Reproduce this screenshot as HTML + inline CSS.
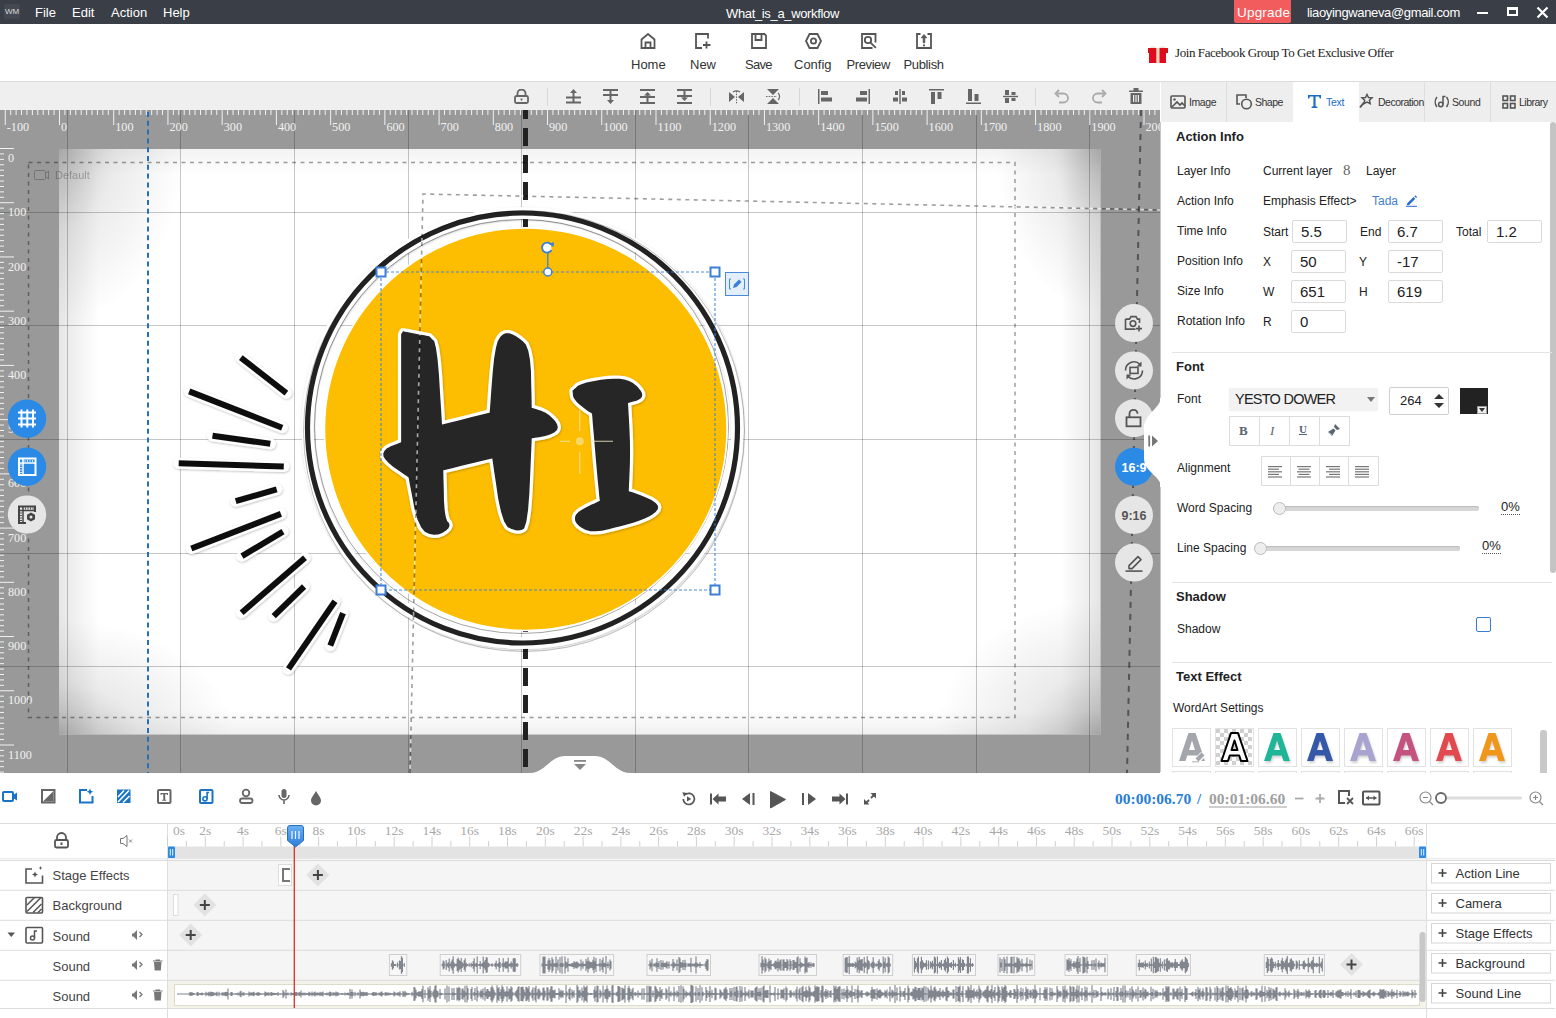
<!DOCTYPE html>
<html><head><meta charset="utf-8">
<style>
*{margin:0;padding:0;box-sizing:border-box}
html,body{width:1556px;height:1018px;overflow:hidden;background:#fff;font-family:"Liberation Sans",sans-serif;color:#333}
.a{position:absolute}
svg{display:block}
#title{left:0;top:0;width:1556px;height:24px;background:#393e47;color:#fff;font-size:13px}
#title .m{position:absolute;top:5px}
#tb{left:0;top:24px;width:1556px;height:58px;background:#fff;border-bottom:1px solid #dcdcdc}
.tbi{position:absolute;top:0;width:50px;text-align:center;font-size:13px;color:#333}
.tbi svg{position:absolute;left:16px;top:9px}
.tbi span{position:absolute;left:-10px;width:70px;top:33px;text-align:center}
#al{left:0;top:82px;width:1160px;height:28px;background:#efefef}
#canvas{left:0;top:110px;width:1160px;height:663px;background:#999;overflow:hidden}
#rp{left:1160px;top:81px;width:396px;height:691px;background:#fff}
.inp{border:1px solid #dadada;border-radius:2px;background:#fff;font-size:15px;color:#222;padding-left:8px;line-height:21px}
#bt{left:0;top:773px;width:1556px;height:50px;background:#fff}
#tl{left:0;top:823px;width:1556px;height:195px;background:#fff;border-top:1px solid #e0e0e0}
</style></head><body>
<div id="title" class="a">
  <div class="a" style="left:4px;top:4px;width:16px;height:15px;background:#434852;border-radius:2px;font-size:8px;line-height:15px;text-align:center;color:#ddd">WM</div>
  <span class="m" style="left:35px">File</span>
  <span class="m" style="left:72px">Edit</span>
  <span class="m" style="left:111px">Action</span>
  <span class="m" style="left:163px">Help</span>
  <span class="m" style="left:726px;top:6px;letter-spacing:-0.35px">What_is_a_workflow</span>
  <div class="a" style="left:1234px;top:0;width:57px;height:23px;background:#f25c5c;border-radius:0 0 2px 2px"></div>
  <span class="m" style="left:1237px;top:5px;font-size:13.5px;letter-spacing:0.2px">Upgrade</span>
  <span class="m" style="left:1307px;top:5px;font-size:13px;letter-spacing:-0.35px">liaoyingwaneva@gmail.com</span>
  <div class="a" style="left:1477px;top:12px;width:11px;height:2px;background:#fff"></div>
  <div class="a" style="left:1507px;top:7px;width:11px;height:9px;border:2px solid #fff;border-top-width:3px"></div>
  <svg class="a" style="left:1536px;top:6px" width="13" height="13" viewBox="0 0 13 13"><path d="M1.5 1.5L11.5 11.5M11.5 1.5L1.5 11.5" stroke="#fff" stroke-width="2.2"/></svg>

</div>

<div id="tb" class="a">
  <svg class="a" style="left:640px;top:9px" width="16" height="16" viewBox="0 0 16 16" fill="none" stroke="#555" stroke-width="1.8"><path d="M1.5 15V6.5L8 1l6.5 5.5V15z"/><path d="M5.5 15V9.5h5V15"/></svg>
  <svg class="a" style="left:695px;top:9px" width="17" height="16" viewBox="0 0 17 16" fill="none" stroke="#555" stroke-width="1.8"><path d="M7 15H1V1h12v4.5"/><path d="M11.5 8.5v7M8 12h7.5"/></svg>
  <svg class="a" style="left:751px;top:9px" width="16" height="16" viewBox="0 0 16 16" fill="none" stroke="#555" stroke-width="1.8"><path d="M1 1h12.5l1.5 1.5V15H1z"/><path d="M4.5 1v6h6V1"/></svg>
  <svg class="a" style="left:805px;top:9px" width="17" height="16" viewBox="0 0 17 16" fill="none" stroke="#555" stroke-width="1.8"><path d="M4.5 1h8l3.5 7-3.5 7h-8L1 8z"/><circle cx="8.5" cy="8" r="2.6"/></svg>
  <svg class="a" style="left:861px;top:9px" width="16" height="16" viewBox="0 0 16 16" fill="none" stroke="#555" stroke-width="1.8"><path d="M11.5 15H1V1h13.5v8.5"/><circle cx="7" cy="7" r="3.2"/><path d="M9.3 9.3L14.8 14.8"/></svg>
  <svg class="a" style="left:916px;top:9px" width="16" height="16" viewBox="0 0 16 16" fill="none" stroke="#555" stroke-width="1.8"><path d="M4.5 1H1v14h14V1h-3.5"/><path d="M8 1.5L5.2 4.8h2v5h1.6v-5h2z" fill="#555" stroke-width="0.8"/><path d="M7 11.5h2v1.8H7z" fill="#555" stroke="none"/></svg>
  <span class="a" style="left:631px;top:33px;font-size:13px;color:#333">Home</span>
  <span class="a" style="left:690px;top:33px;font-size:13px;color:#333">New</span>
  <span class="a" style="left:745px;top:33px;font-size:13px;letter-spacing:-0.7px;color:#333">Save</span>
  <span class="a" style="left:794px;top:33px;font-size:13px;color:#333">Config</span>
  <span class="a" style="left:846.5px;top:33px;font-size:13px;letter-spacing:-0.4px;color:#333">Preview</span>
  <span class="a" style="left:903.5px;top:33px;font-size:13px;letter-spacing:-0.35px;color:#333">Publish</span>
  <svg class="a" style="left:1147px;top:18px" width="22" height="22" viewBox="0 0 22 22"><path d="M3,6 C4,3 8,4 10.5,7 C13,4 17,3 19,6 L18,8 H4z" fill="#f3e4d8"/><rect x="1" y="6" width="20" height="5" fill="#d8101e"/><rect x="2" y="11" width="17" height="10" fill="#e20a1e"/><rect x="9.3" y="6" width="3.2" height="15" fill="#fad7b8"/></svg>
  <span class="a" style="left:1175px;top:21px;font-size:13px;letter-spacing:-0.42px;font-family:'Liberation Serif',serif;color:#222">Join Facebook Group To Get Exclusive Offer</span>
</div>


<div id="al" class="a">
  <svg class="a" style="left:514px;top:7px" width="15" height="15" viewBox="0 0 15 15" fill="none" stroke="#666" stroke-width="1.8"><path d="M3.5 7V4.5a4 4 0 0 1 8 0V7"/><rect x="1" y="7" width="13" height="7" rx="1.5"/><path d="M7.5 9.5v2"/></svg>
  <div class="a" style="left:547px;top:6px;width:1px;height:18px;background:#d8d8d8"></div>
  <svg class="a" style="left:566px;top:7px" width="15" height="15" viewBox="0 0 15 15" fill="#666"><path d="M0 7.5h15v2H0zM0 12.5h15v2H0z" /><path d="M6.5 4h2v9h-2z"/><path d="M7.5 0L11 4H4z"/></svg>
  <svg class="a" style="left:603px;top:7px" width="15" height="15" viewBox="0 0 15 15" fill="#666"><path d="M0 0h15v2H0zM0 5h15v2H0z" /><path d="M6.5 2h2v9h-2z"/><path d="M7.5 15L11 11H4z"/></svg>
  <svg class="a" style="left:640px;top:7px" width="15" height="15" viewBox="0 0 15 15" fill="#666"><path d="M0 0h15v2H0zM0 7h15v2H0zM0 13h15v2H0z" /><path d="M6.5 5h2v8h-2z"/><path d="M7.5 3L11 6.5H4z"/></svg>
  <svg class="a" style="left:677px;top:7px" width="15" height="15" viewBox="0 0 15 15" fill="#666"><path d="M0 0h15v2H0zM0 6h15v2H0zM0 13h15v2H0z" /><path d="M6.5 2h2v8h-2z"/><path d="M7.5 12L11 8.5H4z"/></svg>
  <div class="a" style="left:710px;top:6px;width:1px;height:18px;background:#d8d8d8"></div>
  <svg class="a" style="left:729px;top:7px" width="15" height="15" viewBox="0 0 15 15" fill="#666"><path d="M0 3l6 5-6 5z M15 3l-6 5 6 5z"/><path d="M7.5 2v13" stroke="#666" stroke-width="1" stroke-dasharray="1.5 1.2"/><path d="M4 3a5 3 0 0 1 7 0" fill="none" stroke="#666" stroke-width="1.2"/></svg>
  <svg class="a" style="left:766px;top:7px" width="15" height="15" viewBox="0 0 15 15" fill="#666"><path d="M1 0h12L7 6z M1 15h12L7 9z"/><path d="M0 7.5h11" stroke="#666" stroke-width="1" stroke-dasharray="1.5 1.2"/><path d="M12 4a3 4 0 0 1 0 7" fill="none" stroke="#666" stroke-width="1.2"/></svg>
  <div class="a" style="left:799px;top:6px;width:1px;height:18px;background:#d8d8d8"></div>
  <svg class="a" style="left:818px;top:7px" width="15" height="15" viewBox="0 0 15 15" fill="#666"><path d="M0 0h1.5v15H0z"/><path d="M3 2h7v4H3zM3 8.5h11v4H3z"/></svg>
  <svg class="a" style="left:855px;top:7px" width="15" height="15" viewBox="0 0 15 15" fill="#666"><path d="M13.5 0H15v15h-1.5z"/><path d="M5 2h7v4H5zM1 8.5h11v4H1z"/></svg>
  <svg class="a" style="left:893px;top:7px" width="14" height="15" viewBox="0 0 14 15" fill="#666"><path d="M6.3 0h1.4v15H6.3z"/><path d="M2 2h3v4H2zM9 2h3v4H9zM0 8.5h5v4H0zM9 8.5h5v4H9z"/></svg>
  <svg class="a" style="left:929px;top:7px" width="15" height="15" viewBox="0 0 15 15" fill="#666"><path d="M0 0h15v1.5H0z"/><path d="M2 3h4v12H2zM8.5 3h4v7h-4z"/></svg>
  <svg class="a" style="left:966px;top:7px" width="15" height="15" viewBox="0 0 15 15" fill="#666"><path d="M0 13.5h15V15H0z"/><path d="M2 0h4v12H2zM8.5 5h4v7h-4z"/></svg>
  <svg class="a" style="left:1003px;top:7px" width="15" height="15" viewBox="0 0 15 15" fill="#666"><path d="M0 6.8h15v1.4H0z"/><path d="M2 1h4v5H2zM8.5 3h4v3h-4zM2 9h4v5H2zM8.5 9h4v3h-4z"/></svg>
  <div class="a" style="left:1035px;top:6px;width:1px;height:18px;background:#d8d8d8"></div>
  <svg class="a" style="left:1054px;top:7px" width="16" height="15" viewBox="0 0 16 15" fill="none" stroke="#aaa" stroke-width="1.8"><path d="M5 1L1.5 4.5 5 8"/><path d="M2 4.5h7.5a4.5 4.5 0 0 1 0 9H5"/></svg>
  <svg class="a" style="left:1091px;top:7px" width="16" height="15" viewBox="0 0 16 15" fill="none" stroke="#aaa" stroke-width="1.8"><path d="M11 1l3.5 3.5L11 8"/><path d="M14 4.5H6.5a4.5 4.5 0 0 0 0 9H11"/></svg>
  <svg class="a" style="left:1129px;top:6px" width="14" height="16" viewBox="0 0 14 16" fill="#666"><path d="M0 2.5h14V4H0zM4.5 0h5v2.5h-5z"/><path d="M1.5 5h11v11h-11z"/><path d="M4 7h1.2v7H4zM6.4 7h1.2v7H6.4zM8.8 7H10v7H8.8z" fill="#efefef"/></svg>
</div>

<div id="canvas" class="a"><svg class="a" style="left:0;top:0" width="1160" height="663" viewBox="0 110 1160 663">
<defs><radialGradient id="vg1" cx="0.5" cy="0.5" r="0.5"><stop offset="0" stop-color="#000" stop-opacity="0.24"/><stop offset="0.45" stop-color="#000" stop-opacity="0.08"/><stop offset="1" stop-color="#000" stop-opacity="0"/></radialGradient><filter id="sh" x="-10%" y="-10%" width="120%" height="120%"><feDropShadow dx="0.5" dy="1" stdDeviation="1" flood-color="#000" flood-opacity="0.25"/></filter><clipPath id="stg"><rect x="59" y="149" width="1041.5" height="585.5"/></clipPath><linearGradient id="eL" x1="0" y1="0" x2="1" y2="0"><stop offset="0" stop-color="#000" stop-opacity="0.10"/><stop offset="1" stop-color="#000" stop-opacity="0"/></linearGradient><linearGradient id="eR" x1="1" y1="0" x2="0" y2="0"><stop offset="0" stop-color="#000" stop-opacity="0.10"/><stop offset="1" stop-color="#000" stop-opacity="0"/></linearGradient><linearGradient id="eT" x1="0" y1="0" x2="0" y2="1"><stop offset="0" stop-color="#000" stop-opacity="0.05"/><stop offset="1" stop-color="#000" stop-opacity="0"/></linearGradient><linearGradient id="eB" x1="0" y1="1" x2="0" y2="0"><stop offset="0" stop-color="#000" stop-opacity="0.06"/><stop offset="1" stop-color="#000" stop-opacity="0"/></linearGradient></defs>
<rect x="0" y="110" width="1160" height="663" fill="#999"/>
<rect x="59" y="149" width="1041.5" height="585.5" fill="#fff"/>
<g clip-path="url(#stg)">
<ellipse cx="59" cy="148.5" rx="125" ry="175" fill="url(#vg1)"/>
<ellipse cx="1100.5" cy="148.5" rx="105" ry="165" fill="url(#vg1)"/>
<ellipse cx="59" cy="734.5" rx="175" ry="115" fill="url(#vg1)"/>
<ellipse cx="1100.5" cy="734.5" rx="165" ry="135" fill="url(#vg1)"/>
<rect x="59" y="149" width="40" height="585.5" fill="url(#eL)"/>
<rect x="1060.5" y="149" width="40" height="585.5" fill="url(#eR)"/>
<rect x="59" y="149" width="1041.5" height="25" fill="url(#eT)"/>
<rect x="59" y="709.5" width="1041.5" height="25" fill="url(#eB)"/>
</g>
<line x1="67.5" y1="110" x2="67.5" y2="773" stroke="#000" stroke-opacity="0.22" stroke-width="1"/>
<line x1="180.5" y1="110" x2="180.5" y2="773" stroke="#000" stroke-opacity="0.22" stroke-width="1"/>
<line x1="294.5" y1="110" x2="294.5" y2="773" stroke="#000" stroke-opacity="0.22" stroke-width="1"/>
<line x1="408.5" y1="110" x2="408.5" y2="773" stroke="#000" stroke-opacity="0.22" stroke-width="1"/>
<line x1="521.5" y1="110" x2="521.5" y2="773" stroke="#000" stroke-opacity="0.22" stroke-width="1"/>
<line x1="635.5" y1="110" x2="635.5" y2="773" stroke="#000" stroke-opacity="0.22" stroke-width="1"/>
<line x1="748.5" y1="110" x2="748.5" y2="773" stroke="#000" stroke-opacity="0.22" stroke-width="1"/>
<line x1="862.5" y1="110" x2="862.5" y2="773" stroke="#000" stroke-opacity="0.22" stroke-width="1"/>
<line x1="976.5" y1="110" x2="976.5" y2="773" stroke="#000" stroke-opacity="0.22" stroke-width="1"/>
<line x1="1089.5" y1="110" x2="1089.5" y2="773" stroke="#000" stroke-opacity="0.22" stroke-width="1"/>
<line x1="0" y1="98.5" x2="1160" y2="98.5" stroke="#000" stroke-opacity="0.22" stroke-width="1"/>
<line x1="0" y1="212.5" x2="1160" y2="212.5" stroke="#000" stroke-opacity="0.22" stroke-width="1"/>
<line x1="0" y1="325.5" x2="1160" y2="325.5" stroke="#000" stroke-opacity="0.22" stroke-width="1"/>
<line x1="0" y1="439.5" x2="1160" y2="439.5" stroke="#000" stroke-opacity="0.22" stroke-width="1"/>
<line x1="0" y1="553.5" x2="1160" y2="553.5" stroke="#000" stroke-opacity="0.22" stroke-width="1"/>
<line x1="0" y1="666.5" x2="1160" y2="666.5" stroke="#000" stroke-opacity="0.22" stroke-width="1"/>
<line x1="0" y1="780.5" x2="1160" y2="780.5" stroke="#000" stroke-opacity="0.22" stroke-width="1"/>
<line x1="5.27" y1="110" x2="5.27" y2="125" stroke="#f2f2f2" stroke-width="1"/>
<text x="6.8" y="131" font-family="Liberation Serif" font-size="12.2" fill="#f2f2f2">-100</text>
<line x1="10.70" y1="110" x2="10.70" y2="115" stroke="#f2f2f2" stroke-width="1"/>
<line x1="16.12" y1="110" x2="16.12" y2="115" stroke="#f2f2f2" stroke-width="1"/>
<line x1="21.54" y1="110" x2="21.54" y2="115" stroke="#f2f2f2" stroke-width="1"/>
<line x1="26.96" y1="110" x2="26.96" y2="115" stroke="#f2f2f2" stroke-width="1"/>
<line x1="32.39" y1="110" x2="32.39" y2="115" stroke="#f2f2f2" stroke-width="1"/>
<line x1="37.81" y1="110" x2="37.81" y2="115" stroke="#f2f2f2" stroke-width="1"/>
<line x1="43.23" y1="110" x2="43.23" y2="115" stroke="#f2f2f2" stroke-width="1"/>
<line x1="48.65" y1="110" x2="48.65" y2="115" stroke="#f2f2f2" stroke-width="1"/>
<line x1="54.08" y1="110" x2="54.08" y2="115" stroke="#f2f2f2" stroke-width="1"/>
<line x1="59.50" y1="110" x2="59.50" y2="125" stroke="#f2f2f2" stroke-width="1"/>
<text x="61.0" y="131" font-family="Liberation Serif" font-size="12.2" fill="#f2f2f2">0</text>
<line x1="64.92" y1="110" x2="64.92" y2="115" stroke="#f2f2f2" stroke-width="1"/>
<line x1="70.35" y1="110" x2="70.35" y2="115" stroke="#f2f2f2" stroke-width="1"/>
<line x1="75.77" y1="110" x2="75.77" y2="115" stroke="#f2f2f2" stroke-width="1"/>
<line x1="81.19" y1="110" x2="81.19" y2="115" stroke="#f2f2f2" stroke-width="1"/>
<line x1="86.61" y1="110" x2="86.61" y2="115" stroke="#f2f2f2" stroke-width="1"/>
<line x1="92.04" y1="110" x2="92.04" y2="115" stroke="#f2f2f2" stroke-width="1"/>
<line x1="97.46" y1="110" x2="97.46" y2="115" stroke="#f2f2f2" stroke-width="1"/>
<line x1="102.88" y1="110" x2="102.88" y2="115" stroke="#f2f2f2" stroke-width="1"/>
<line x1="108.30" y1="110" x2="108.30" y2="115" stroke="#f2f2f2" stroke-width="1"/>
<line x1="113.73" y1="110" x2="113.73" y2="125" stroke="#f2f2f2" stroke-width="1"/>
<text x="115.2" y="131" font-family="Liberation Serif" font-size="12.2" fill="#f2f2f2">100</text>
<line x1="119.15" y1="110" x2="119.15" y2="115" stroke="#f2f2f2" stroke-width="1"/>
<line x1="124.57" y1="110" x2="124.57" y2="115" stroke="#f2f2f2" stroke-width="1"/>
<line x1="129.99" y1="110" x2="129.99" y2="115" stroke="#f2f2f2" stroke-width="1"/>
<line x1="135.42" y1="110" x2="135.42" y2="115" stroke="#f2f2f2" stroke-width="1"/>
<line x1="140.84" y1="110" x2="140.84" y2="115" stroke="#f2f2f2" stroke-width="1"/>
<line x1="146.26" y1="110" x2="146.26" y2="115" stroke="#f2f2f2" stroke-width="1"/>
<line x1="151.68" y1="110" x2="151.68" y2="115" stroke="#f2f2f2" stroke-width="1"/>
<line x1="157.11" y1="110" x2="157.11" y2="115" stroke="#f2f2f2" stroke-width="1"/>
<line x1="162.53" y1="110" x2="162.53" y2="115" stroke="#f2f2f2" stroke-width="1"/>
<line x1="167.95" y1="110" x2="167.95" y2="125" stroke="#f2f2f2" stroke-width="1"/>
<text x="169.5" y="131" font-family="Liberation Serif" font-size="12.2" fill="#f2f2f2">200</text>
<line x1="173.37" y1="110" x2="173.37" y2="115" stroke="#f2f2f2" stroke-width="1"/>
<line x1="178.80" y1="110" x2="178.80" y2="115" stroke="#f2f2f2" stroke-width="1"/>
<line x1="184.22" y1="110" x2="184.22" y2="115" stroke="#f2f2f2" stroke-width="1"/>
<line x1="189.64" y1="110" x2="189.64" y2="115" stroke="#f2f2f2" stroke-width="1"/>
<line x1="195.06" y1="110" x2="195.06" y2="115" stroke="#f2f2f2" stroke-width="1"/>
<line x1="200.49" y1="110" x2="200.49" y2="115" stroke="#f2f2f2" stroke-width="1"/>
<line x1="205.91" y1="110" x2="205.91" y2="115" stroke="#f2f2f2" stroke-width="1"/>
<line x1="211.33" y1="110" x2="211.33" y2="115" stroke="#f2f2f2" stroke-width="1"/>
<line x1="216.76" y1="110" x2="216.76" y2="115" stroke="#f2f2f2" stroke-width="1"/>
<line x1="222.18" y1="110" x2="222.18" y2="125" stroke="#f2f2f2" stroke-width="1"/>
<text x="223.7" y="131" font-family="Liberation Serif" font-size="12.2" fill="#f2f2f2">300</text>
<line x1="227.60" y1="110" x2="227.60" y2="115" stroke="#f2f2f2" stroke-width="1"/>
<line x1="233.02" y1="110" x2="233.02" y2="115" stroke="#f2f2f2" stroke-width="1"/>
<line x1="238.45" y1="110" x2="238.45" y2="115" stroke="#f2f2f2" stroke-width="1"/>
<line x1="243.87" y1="110" x2="243.87" y2="115" stroke="#f2f2f2" stroke-width="1"/>
<line x1="249.29" y1="110" x2="249.29" y2="115" stroke="#f2f2f2" stroke-width="1"/>
<line x1="254.71" y1="110" x2="254.71" y2="115" stroke="#f2f2f2" stroke-width="1"/>
<line x1="260.14" y1="110" x2="260.14" y2="115" stroke="#f2f2f2" stroke-width="1"/>
<line x1="265.56" y1="110" x2="265.56" y2="115" stroke="#f2f2f2" stroke-width="1"/>
<line x1="270.98" y1="110" x2="270.98" y2="115" stroke="#f2f2f2" stroke-width="1"/>
<line x1="276.40" y1="110" x2="276.40" y2="125" stroke="#f2f2f2" stroke-width="1"/>
<text x="277.9" y="131" font-family="Liberation Serif" font-size="12.2" fill="#f2f2f2">400</text>
<line x1="281.83" y1="110" x2="281.83" y2="115" stroke="#f2f2f2" stroke-width="1"/>
<line x1="287.25" y1="110" x2="287.25" y2="115" stroke="#f2f2f2" stroke-width="1"/>
<line x1="292.67" y1="110" x2="292.67" y2="115" stroke="#f2f2f2" stroke-width="1"/>
<line x1="298.09" y1="110" x2="298.09" y2="115" stroke="#f2f2f2" stroke-width="1"/>
<line x1="303.52" y1="110" x2="303.52" y2="115" stroke="#f2f2f2" stroke-width="1"/>
<line x1="308.94" y1="110" x2="308.94" y2="115" stroke="#f2f2f2" stroke-width="1"/>
<line x1="314.36" y1="110" x2="314.36" y2="115" stroke="#f2f2f2" stroke-width="1"/>
<line x1="319.78" y1="110" x2="319.78" y2="115" stroke="#f2f2f2" stroke-width="1"/>
<line x1="325.21" y1="110" x2="325.21" y2="115" stroke="#f2f2f2" stroke-width="1"/>
<line x1="330.63" y1="110" x2="330.63" y2="125" stroke="#f2f2f2" stroke-width="1"/>
<text x="332.1" y="131" font-family="Liberation Serif" font-size="12.2" fill="#f2f2f2">500</text>
<line x1="336.05" y1="110" x2="336.05" y2="115" stroke="#f2f2f2" stroke-width="1"/>
<line x1="341.48" y1="110" x2="341.48" y2="115" stroke="#f2f2f2" stroke-width="1"/>
<line x1="346.90" y1="110" x2="346.90" y2="115" stroke="#f2f2f2" stroke-width="1"/>
<line x1="352.32" y1="110" x2="352.32" y2="115" stroke="#f2f2f2" stroke-width="1"/>
<line x1="357.74" y1="110" x2="357.74" y2="115" stroke="#f2f2f2" stroke-width="1"/>
<line x1="363.17" y1="110" x2="363.17" y2="115" stroke="#f2f2f2" stroke-width="1"/>
<line x1="368.59" y1="110" x2="368.59" y2="115" stroke="#f2f2f2" stroke-width="1"/>
<line x1="374.01" y1="110" x2="374.01" y2="115" stroke="#f2f2f2" stroke-width="1"/>
<line x1="379.43" y1="110" x2="379.43" y2="115" stroke="#f2f2f2" stroke-width="1"/>
<line x1="384.86" y1="110" x2="384.86" y2="125" stroke="#f2f2f2" stroke-width="1"/>
<text x="386.4" y="131" font-family="Liberation Serif" font-size="12.2" fill="#f2f2f2">600</text>
<line x1="390.28" y1="110" x2="390.28" y2="115" stroke="#f2f2f2" stroke-width="1"/>
<line x1="395.70" y1="110" x2="395.70" y2="115" stroke="#f2f2f2" stroke-width="1"/>
<line x1="401.12" y1="110" x2="401.12" y2="115" stroke="#f2f2f2" stroke-width="1"/>
<line x1="406.55" y1="110" x2="406.55" y2="115" stroke="#f2f2f2" stroke-width="1"/>
<line x1="411.97" y1="110" x2="411.97" y2="115" stroke="#f2f2f2" stroke-width="1"/>
<line x1="417.39" y1="110" x2="417.39" y2="115" stroke="#f2f2f2" stroke-width="1"/>
<line x1="422.81" y1="110" x2="422.81" y2="115" stroke="#f2f2f2" stroke-width="1"/>
<line x1="428.24" y1="110" x2="428.24" y2="115" stroke="#f2f2f2" stroke-width="1"/>
<line x1="433.66" y1="110" x2="433.66" y2="115" stroke="#f2f2f2" stroke-width="1"/>
<line x1="439.08" y1="110" x2="439.08" y2="125" stroke="#f2f2f2" stroke-width="1"/>
<text x="440.6" y="131" font-family="Liberation Serif" font-size="12.2" fill="#f2f2f2">700</text>
<line x1="444.50" y1="110" x2="444.50" y2="115" stroke="#f2f2f2" stroke-width="1"/>
<line x1="449.93" y1="110" x2="449.93" y2="115" stroke="#f2f2f2" stroke-width="1"/>
<line x1="455.35" y1="110" x2="455.35" y2="115" stroke="#f2f2f2" stroke-width="1"/>
<line x1="460.77" y1="110" x2="460.77" y2="115" stroke="#f2f2f2" stroke-width="1"/>
<line x1="466.19" y1="110" x2="466.19" y2="115" stroke="#f2f2f2" stroke-width="1"/>
<line x1="471.62" y1="110" x2="471.62" y2="115" stroke="#f2f2f2" stroke-width="1"/>
<line x1="477.04" y1="110" x2="477.04" y2="115" stroke="#f2f2f2" stroke-width="1"/>
<line x1="482.46" y1="110" x2="482.46" y2="115" stroke="#f2f2f2" stroke-width="1"/>
<line x1="487.89" y1="110" x2="487.89" y2="115" stroke="#f2f2f2" stroke-width="1"/>
<line x1="493.31" y1="110" x2="493.31" y2="125" stroke="#f2f2f2" stroke-width="1"/>
<text x="494.8" y="131" font-family="Liberation Serif" font-size="12.2" fill="#f2f2f2">800</text>
<line x1="498.73" y1="110" x2="498.73" y2="115" stroke="#f2f2f2" stroke-width="1"/>
<line x1="504.15" y1="110" x2="504.15" y2="115" stroke="#f2f2f2" stroke-width="1"/>
<line x1="509.58" y1="110" x2="509.58" y2="115" stroke="#f2f2f2" stroke-width="1"/>
<line x1="515.00" y1="110" x2="515.00" y2="115" stroke="#f2f2f2" stroke-width="1"/>
<line x1="520.42" y1="110" x2="520.42" y2="115" stroke="#f2f2f2" stroke-width="1"/>
<line x1="525.84" y1="110" x2="525.84" y2="115" stroke="#f2f2f2" stroke-width="1"/>
<line x1="531.27" y1="110" x2="531.27" y2="115" stroke="#f2f2f2" stroke-width="1"/>
<line x1="536.69" y1="110" x2="536.69" y2="115" stroke="#f2f2f2" stroke-width="1"/>
<line x1="542.11" y1="110" x2="542.11" y2="115" stroke="#f2f2f2" stroke-width="1"/>
<line x1="547.53" y1="110" x2="547.53" y2="125" stroke="#f2f2f2" stroke-width="1"/>
<text x="549.0" y="131" font-family="Liberation Serif" font-size="12.2" fill="#f2f2f2">900</text>
<line x1="552.96" y1="110" x2="552.96" y2="115" stroke="#f2f2f2" stroke-width="1"/>
<line x1="558.38" y1="110" x2="558.38" y2="115" stroke="#f2f2f2" stroke-width="1"/>
<line x1="563.80" y1="110" x2="563.80" y2="115" stroke="#f2f2f2" stroke-width="1"/>
<line x1="569.22" y1="110" x2="569.22" y2="115" stroke="#f2f2f2" stroke-width="1"/>
<line x1="574.65" y1="110" x2="574.65" y2="115" stroke="#f2f2f2" stroke-width="1"/>
<line x1="580.07" y1="110" x2="580.07" y2="115" stroke="#f2f2f2" stroke-width="1"/>
<line x1="585.49" y1="110" x2="585.49" y2="115" stroke="#f2f2f2" stroke-width="1"/>
<line x1="590.91" y1="110" x2="590.91" y2="115" stroke="#f2f2f2" stroke-width="1"/>
<line x1="596.34" y1="110" x2="596.34" y2="115" stroke="#f2f2f2" stroke-width="1"/>
<line x1="601.76" y1="110" x2="601.76" y2="125" stroke="#f2f2f2" stroke-width="1"/>
<text x="603.3" y="131" font-family="Liberation Serif" font-size="12.2" fill="#f2f2f2">1000</text>
<line x1="607.18" y1="110" x2="607.18" y2="115" stroke="#f2f2f2" stroke-width="1"/>
<line x1="612.61" y1="110" x2="612.61" y2="115" stroke="#f2f2f2" stroke-width="1"/>
<line x1="618.03" y1="110" x2="618.03" y2="115" stroke="#f2f2f2" stroke-width="1"/>
<line x1="623.45" y1="110" x2="623.45" y2="115" stroke="#f2f2f2" stroke-width="1"/>
<line x1="628.87" y1="110" x2="628.87" y2="115" stroke="#f2f2f2" stroke-width="1"/>
<line x1="634.30" y1="110" x2="634.30" y2="115" stroke="#f2f2f2" stroke-width="1"/>
<line x1="639.72" y1="110" x2="639.72" y2="115" stroke="#f2f2f2" stroke-width="1"/>
<line x1="645.14" y1="110" x2="645.14" y2="115" stroke="#f2f2f2" stroke-width="1"/>
<line x1="650.56" y1="110" x2="650.56" y2="115" stroke="#f2f2f2" stroke-width="1"/>
<line x1="655.99" y1="110" x2="655.99" y2="125" stroke="#f2f2f2" stroke-width="1"/>
<text x="657.5" y="131" font-family="Liberation Serif" font-size="12.2" fill="#f2f2f2">1100</text>
<line x1="661.41" y1="110" x2="661.41" y2="115" stroke="#f2f2f2" stroke-width="1"/>
<line x1="666.83" y1="110" x2="666.83" y2="115" stroke="#f2f2f2" stroke-width="1"/>
<line x1="672.25" y1="110" x2="672.25" y2="115" stroke="#f2f2f2" stroke-width="1"/>
<line x1="677.68" y1="110" x2="677.68" y2="115" stroke="#f2f2f2" stroke-width="1"/>
<line x1="683.10" y1="110" x2="683.10" y2="115" stroke="#f2f2f2" stroke-width="1"/>
<line x1="688.52" y1="110" x2="688.52" y2="115" stroke="#f2f2f2" stroke-width="1"/>
<line x1="693.94" y1="110" x2="693.94" y2="115" stroke="#f2f2f2" stroke-width="1"/>
<line x1="699.37" y1="110" x2="699.37" y2="115" stroke="#f2f2f2" stroke-width="1"/>
<line x1="704.79" y1="110" x2="704.79" y2="115" stroke="#f2f2f2" stroke-width="1"/>
<line x1="710.21" y1="110" x2="710.21" y2="125" stroke="#f2f2f2" stroke-width="1"/>
<text x="711.7" y="131" font-family="Liberation Serif" font-size="12.2" fill="#f2f2f2">1200</text>
<line x1="715.63" y1="110" x2="715.63" y2="115" stroke="#f2f2f2" stroke-width="1"/>
<line x1="721.06" y1="110" x2="721.06" y2="115" stroke="#f2f2f2" stroke-width="1"/>
<line x1="726.48" y1="110" x2="726.48" y2="115" stroke="#f2f2f2" stroke-width="1"/>
<line x1="731.90" y1="110" x2="731.90" y2="115" stroke="#f2f2f2" stroke-width="1"/>
<line x1="737.33" y1="110" x2="737.33" y2="115" stroke="#f2f2f2" stroke-width="1"/>
<line x1="742.75" y1="110" x2="742.75" y2="115" stroke="#f2f2f2" stroke-width="1"/>
<line x1="748.17" y1="110" x2="748.17" y2="115" stroke="#f2f2f2" stroke-width="1"/>
<line x1="753.59" y1="110" x2="753.59" y2="115" stroke="#f2f2f2" stroke-width="1"/>
<line x1="759.02" y1="110" x2="759.02" y2="115" stroke="#f2f2f2" stroke-width="1"/>
<line x1="764.44" y1="110" x2="764.44" y2="125" stroke="#f2f2f2" stroke-width="1"/>
<text x="765.9" y="131" font-family="Liberation Serif" font-size="12.2" fill="#f2f2f2">1300</text>
<line x1="769.86" y1="110" x2="769.86" y2="115" stroke="#f2f2f2" stroke-width="1"/>
<line x1="775.28" y1="110" x2="775.28" y2="115" stroke="#f2f2f2" stroke-width="1"/>
<line x1="780.71" y1="110" x2="780.71" y2="115" stroke="#f2f2f2" stroke-width="1"/>
<line x1="786.13" y1="110" x2="786.13" y2="115" stroke="#f2f2f2" stroke-width="1"/>
<line x1="791.55" y1="110" x2="791.55" y2="115" stroke="#f2f2f2" stroke-width="1"/>
<line x1="796.97" y1="110" x2="796.97" y2="115" stroke="#f2f2f2" stroke-width="1"/>
<line x1="802.40" y1="110" x2="802.40" y2="115" stroke="#f2f2f2" stroke-width="1"/>
<line x1="807.82" y1="110" x2="807.82" y2="115" stroke="#f2f2f2" stroke-width="1"/>
<line x1="813.24" y1="110" x2="813.24" y2="115" stroke="#f2f2f2" stroke-width="1"/>
<line x1="818.66" y1="110" x2="818.66" y2="125" stroke="#f2f2f2" stroke-width="1"/>
<text x="820.2" y="131" font-family="Liberation Serif" font-size="12.2" fill="#f2f2f2">1400</text>
<line x1="824.09" y1="110" x2="824.09" y2="115" stroke="#f2f2f2" stroke-width="1"/>
<line x1="829.51" y1="110" x2="829.51" y2="115" stroke="#f2f2f2" stroke-width="1"/>
<line x1="834.93" y1="110" x2="834.93" y2="115" stroke="#f2f2f2" stroke-width="1"/>
<line x1="840.35" y1="110" x2="840.35" y2="115" stroke="#f2f2f2" stroke-width="1"/>
<line x1="845.78" y1="110" x2="845.78" y2="115" stroke="#f2f2f2" stroke-width="1"/>
<line x1="851.20" y1="110" x2="851.20" y2="115" stroke="#f2f2f2" stroke-width="1"/>
<line x1="856.62" y1="110" x2="856.62" y2="115" stroke="#f2f2f2" stroke-width="1"/>
<line x1="862.04" y1="110" x2="862.04" y2="115" stroke="#f2f2f2" stroke-width="1"/>
<line x1="867.47" y1="110" x2="867.47" y2="115" stroke="#f2f2f2" stroke-width="1"/>
<line x1="872.89" y1="110" x2="872.89" y2="125" stroke="#f2f2f2" stroke-width="1"/>
<text x="874.4" y="131" font-family="Liberation Serif" font-size="12.2" fill="#f2f2f2">1500</text>
<line x1="878.31" y1="110" x2="878.31" y2="115" stroke="#f2f2f2" stroke-width="1"/>
<line x1="883.74" y1="110" x2="883.74" y2="115" stroke="#f2f2f2" stroke-width="1"/>
<line x1="889.16" y1="110" x2="889.16" y2="115" stroke="#f2f2f2" stroke-width="1"/>
<line x1="894.58" y1="110" x2="894.58" y2="115" stroke="#f2f2f2" stroke-width="1"/>
<line x1="900.00" y1="110" x2="900.00" y2="115" stroke="#f2f2f2" stroke-width="1"/>
<line x1="905.43" y1="110" x2="905.43" y2="115" stroke="#f2f2f2" stroke-width="1"/>
<line x1="910.85" y1="110" x2="910.85" y2="115" stroke="#f2f2f2" stroke-width="1"/>
<line x1="916.27" y1="110" x2="916.27" y2="115" stroke="#f2f2f2" stroke-width="1"/>
<line x1="921.69" y1="110" x2="921.69" y2="115" stroke="#f2f2f2" stroke-width="1"/>
<line x1="927.12" y1="110" x2="927.12" y2="125" stroke="#f2f2f2" stroke-width="1"/>
<text x="928.6" y="131" font-family="Liberation Serif" font-size="12.2" fill="#f2f2f2">1600</text>
<line x1="932.54" y1="110" x2="932.54" y2="115" stroke="#f2f2f2" stroke-width="1"/>
<line x1="937.96" y1="110" x2="937.96" y2="115" stroke="#f2f2f2" stroke-width="1"/>
<line x1="943.38" y1="110" x2="943.38" y2="115" stroke="#f2f2f2" stroke-width="1"/>
<line x1="948.81" y1="110" x2="948.81" y2="115" stroke="#f2f2f2" stroke-width="1"/>
<line x1="954.23" y1="110" x2="954.23" y2="115" stroke="#f2f2f2" stroke-width="1"/>
<line x1="959.65" y1="110" x2="959.65" y2="115" stroke="#f2f2f2" stroke-width="1"/>
<line x1="965.07" y1="110" x2="965.07" y2="115" stroke="#f2f2f2" stroke-width="1"/>
<line x1="970.50" y1="110" x2="970.50" y2="115" stroke="#f2f2f2" stroke-width="1"/>
<line x1="975.92" y1="110" x2="975.92" y2="115" stroke="#f2f2f2" stroke-width="1"/>
<line x1="981.34" y1="110" x2="981.34" y2="125" stroke="#f2f2f2" stroke-width="1"/>
<text x="982.8" y="131" font-family="Liberation Serif" font-size="12.2" fill="#f2f2f2">1700</text>
<line x1="986.76" y1="110" x2="986.76" y2="115" stroke="#f2f2f2" stroke-width="1"/>
<line x1="992.19" y1="110" x2="992.19" y2="115" stroke="#f2f2f2" stroke-width="1"/>
<line x1="997.61" y1="110" x2="997.61" y2="115" stroke="#f2f2f2" stroke-width="1"/>
<line x1="1003.03" y1="110" x2="1003.03" y2="115" stroke="#f2f2f2" stroke-width="1"/>
<line x1="1008.46" y1="110" x2="1008.46" y2="115" stroke="#f2f2f2" stroke-width="1"/>
<line x1="1013.88" y1="110" x2="1013.88" y2="115" stroke="#f2f2f2" stroke-width="1"/>
<line x1="1019.30" y1="110" x2="1019.30" y2="115" stroke="#f2f2f2" stroke-width="1"/>
<line x1="1024.72" y1="110" x2="1024.72" y2="115" stroke="#f2f2f2" stroke-width="1"/>
<line x1="1030.15" y1="110" x2="1030.15" y2="115" stroke="#f2f2f2" stroke-width="1"/>
<line x1="1035.57" y1="110" x2="1035.57" y2="125" stroke="#f2f2f2" stroke-width="1"/>
<text x="1037.1" y="131" font-family="Liberation Serif" font-size="12.2" fill="#f2f2f2">1800</text>
<line x1="1040.99" y1="110" x2="1040.99" y2="115" stroke="#f2f2f2" stroke-width="1"/>
<line x1="1046.41" y1="110" x2="1046.41" y2="115" stroke="#f2f2f2" stroke-width="1"/>
<line x1="1051.84" y1="110" x2="1051.84" y2="115" stroke="#f2f2f2" stroke-width="1"/>
<line x1="1057.26" y1="110" x2="1057.26" y2="115" stroke="#f2f2f2" stroke-width="1"/>
<line x1="1062.68" y1="110" x2="1062.68" y2="115" stroke="#f2f2f2" stroke-width="1"/>
<line x1="1068.10" y1="110" x2="1068.10" y2="115" stroke="#f2f2f2" stroke-width="1"/>
<line x1="1073.53" y1="110" x2="1073.53" y2="115" stroke="#f2f2f2" stroke-width="1"/>
<line x1="1078.95" y1="110" x2="1078.95" y2="115" stroke="#f2f2f2" stroke-width="1"/>
<line x1="1084.37" y1="110" x2="1084.37" y2="115" stroke="#f2f2f2" stroke-width="1"/>
<line x1="1089.79" y1="110" x2="1089.79" y2="125" stroke="#f2f2f2" stroke-width="1"/>
<text x="1091.3" y="131" font-family="Liberation Serif" font-size="12.2" fill="#f2f2f2">1900</text>
<line x1="1095.22" y1="110" x2="1095.22" y2="115" stroke="#f2f2f2" stroke-width="1"/>
<line x1="1100.64" y1="110" x2="1100.64" y2="115" stroke="#f2f2f2" stroke-width="1"/>
<line x1="1106.06" y1="110" x2="1106.06" y2="115" stroke="#f2f2f2" stroke-width="1"/>
<line x1="1111.48" y1="110" x2="1111.48" y2="115" stroke="#f2f2f2" stroke-width="1"/>
<line x1="1116.91" y1="110" x2="1116.91" y2="115" stroke="#f2f2f2" stroke-width="1"/>
<line x1="1122.33" y1="110" x2="1122.33" y2="115" stroke="#f2f2f2" stroke-width="1"/>
<line x1="1127.75" y1="110" x2="1127.75" y2="115" stroke="#f2f2f2" stroke-width="1"/>
<line x1="1133.17" y1="110" x2="1133.17" y2="115" stroke="#f2f2f2" stroke-width="1"/>
<line x1="1138.60" y1="110" x2="1138.60" y2="115" stroke="#f2f2f2" stroke-width="1"/>
<line x1="1144.02" y1="110" x2="1144.02" y2="125" stroke="#f2f2f2" stroke-width="1"/>
<text x="1145.5" y="131" font-family="Liberation Serif" font-size="12.2" fill="#f2f2f2">2000</text>
<line x1="1149.44" y1="110" x2="1149.44" y2="115" stroke="#f2f2f2" stroke-width="1"/>
<line x1="1154.87" y1="110" x2="1154.87" y2="115" stroke="#f2f2f2" stroke-width="1"/>
<line x1="0" y1="148.50" x2="14" y2="148.50" stroke="#f2f2f2" stroke-width="1"/>
<text x="8" y="162.0" font-family="Liberation Serif" font-size="12.2" fill="#f2f2f2">0</text>
<line x1="0" y1="153.92" x2="4" y2="153.92" stroke="#f2f2f2" stroke-width="1"/>
<line x1="0" y1="159.35" x2="4" y2="159.35" stroke="#f2f2f2" stroke-width="1"/>
<line x1="0" y1="164.77" x2="4" y2="164.77" stroke="#f2f2f2" stroke-width="1"/>
<line x1="0" y1="170.19" x2="4" y2="170.19" stroke="#f2f2f2" stroke-width="1"/>
<line x1="0" y1="175.61" x2="4" y2="175.61" stroke="#f2f2f2" stroke-width="1"/>
<line x1="0" y1="181.04" x2="4" y2="181.04" stroke="#f2f2f2" stroke-width="1"/>
<line x1="0" y1="186.46" x2="4" y2="186.46" stroke="#f2f2f2" stroke-width="1"/>
<line x1="0" y1="191.88" x2="4" y2="191.88" stroke="#f2f2f2" stroke-width="1"/>
<line x1="0" y1="197.30" x2="4" y2="197.30" stroke="#f2f2f2" stroke-width="1"/>
<line x1="0" y1="202.73" x2="14" y2="202.73" stroke="#f2f2f2" stroke-width="1"/>
<text x="8" y="216.2" font-family="Liberation Serif" font-size="12.2" fill="#f2f2f2">100</text>
<line x1="0" y1="208.15" x2="4" y2="208.15" stroke="#f2f2f2" stroke-width="1"/>
<line x1="0" y1="213.57" x2="4" y2="213.57" stroke="#f2f2f2" stroke-width="1"/>
<line x1="0" y1="218.99" x2="4" y2="218.99" stroke="#f2f2f2" stroke-width="1"/>
<line x1="0" y1="224.42" x2="4" y2="224.42" stroke="#f2f2f2" stroke-width="1"/>
<line x1="0" y1="229.84" x2="4" y2="229.84" stroke="#f2f2f2" stroke-width="1"/>
<line x1="0" y1="235.26" x2="4" y2="235.26" stroke="#f2f2f2" stroke-width="1"/>
<line x1="0" y1="240.68" x2="4" y2="240.68" stroke="#f2f2f2" stroke-width="1"/>
<line x1="0" y1="246.11" x2="4" y2="246.11" stroke="#f2f2f2" stroke-width="1"/>
<line x1="0" y1="251.53" x2="4" y2="251.53" stroke="#f2f2f2" stroke-width="1"/>
<line x1="0" y1="256.95" x2="14" y2="256.95" stroke="#f2f2f2" stroke-width="1"/>
<text x="8" y="270.5" font-family="Liberation Serif" font-size="12.2" fill="#f2f2f2">200</text>
<line x1="0" y1="262.37" x2="4" y2="262.37" stroke="#f2f2f2" stroke-width="1"/>
<line x1="0" y1="267.80" x2="4" y2="267.80" stroke="#f2f2f2" stroke-width="1"/>
<line x1="0" y1="273.22" x2="4" y2="273.22" stroke="#f2f2f2" stroke-width="1"/>
<line x1="0" y1="278.64" x2="4" y2="278.64" stroke="#f2f2f2" stroke-width="1"/>
<line x1="0" y1="284.06" x2="4" y2="284.06" stroke="#f2f2f2" stroke-width="1"/>
<line x1="0" y1="289.49" x2="4" y2="289.49" stroke="#f2f2f2" stroke-width="1"/>
<line x1="0" y1="294.91" x2="4" y2="294.91" stroke="#f2f2f2" stroke-width="1"/>
<line x1="0" y1="300.33" x2="4" y2="300.33" stroke="#f2f2f2" stroke-width="1"/>
<line x1="0" y1="305.76" x2="4" y2="305.76" stroke="#f2f2f2" stroke-width="1"/>
<line x1="0" y1="311.18" x2="14" y2="311.18" stroke="#f2f2f2" stroke-width="1"/>
<text x="8" y="324.7" font-family="Liberation Serif" font-size="12.2" fill="#f2f2f2">300</text>
<line x1="0" y1="316.60" x2="4" y2="316.60" stroke="#f2f2f2" stroke-width="1"/>
<line x1="0" y1="322.02" x2="4" y2="322.02" stroke="#f2f2f2" stroke-width="1"/>
<line x1="0" y1="327.45" x2="4" y2="327.45" stroke="#f2f2f2" stroke-width="1"/>
<line x1="0" y1="332.87" x2="4" y2="332.87" stroke="#f2f2f2" stroke-width="1"/>
<line x1="0" y1="338.29" x2="4" y2="338.29" stroke="#f2f2f2" stroke-width="1"/>
<line x1="0" y1="343.71" x2="4" y2="343.71" stroke="#f2f2f2" stroke-width="1"/>
<line x1="0" y1="349.14" x2="4" y2="349.14" stroke="#f2f2f2" stroke-width="1"/>
<line x1="0" y1="354.56" x2="4" y2="354.56" stroke="#f2f2f2" stroke-width="1"/>
<line x1="0" y1="359.98" x2="4" y2="359.98" stroke="#f2f2f2" stroke-width="1"/>
<line x1="0" y1="365.40" x2="14" y2="365.40" stroke="#f2f2f2" stroke-width="1"/>
<text x="8" y="378.9" font-family="Liberation Serif" font-size="12.2" fill="#f2f2f2">400</text>
<line x1="0" y1="370.83" x2="4" y2="370.83" stroke="#f2f2f2" stroke-width="1"/>
<line x1="0" y1="376.25" x2="4" y2="376.25" stroke="#f2f2f2" stroke-width="1"/>
<line x1="0" y1="381.67" x2="4" y2="381.67" stroke="#f2f2f2" stroke-width="1"/>
<line x1="0" y1="387.09" x2="4" y2="387.09" stroke="#f2f2f2" stroke-width="1"/>
<line x1="0" y1="392.52" x2="4" y2="392.52" stroke="#f2f2f2" stroke-width="1"/>
<line x1="0" y1="397.94" x2="4" y2="397.94" stroke="#f2f2f2" stroke-width="1"/>
<line x1="0" y1="403.36" x2="4" y2="403.36" stroke="#f2f2f2" stroke-width="1"/>
<line x1="0" y1="408.78" x2="4" y2="408.78" stroke="#f2f2f2" stroke-width="1"/>
<line x1="0" y1="414.21" x2="4" y2="414.21" stroke="#f2f2f2" stroke-width="1"/>
<line x1="0" y1="419.63" x2="14" y2="419.63" stroke="#f2f2f2" stroke-width="1"/>
<text x="8" y="433.1" font-family="Liberation Serif" font-size="12.2" fill="#f2f2f2">500</text>
<line x1="0" y1="425.05" x2="4" y2="425.05" stroke="#f2f2f2" stroke-width="1"/>
<line x1="0" y1="430.48" x2="4" y2="430.48" stroke="#f2f2f2" stroke-width="1"/>
<line x1="0" y1="435.90" x2="4" y2="435.90" stroke="#f2f2f2" stroke-width="1"/>
<line x1="0" y1="441.32" x2="4" y2="441.32" stroke="#f2f2f2" stroke-width="1"/>
<line x1="0" y1="446.74" x2="4" y2="446.74" stroke="#f2f2f2" stroke-width="1"/>
<line x1="0" y1="452.17" x2="4" y2="452.17" stroke="#f2f2f2" stroke-width="1"/>
<line x1="0" y1="457.59" x2="4" y2="457.59" stroke="#f2f2f2" stroke-width="1"/>
<line x1="0" y1="463.01" x2="4" y2="463.01" stroke="#f2f2f2" stroke-width="1"/>
<line x1="0" y1="468.43" x2="4" y2="468.43" stroke="#f2f2f2" stroke-width="1"/>
<line x1="0" y1="473.86" x2="14" y2="473.86" stroke="#f2f2f2" stroke-width="1"/>
<text x="8" y="487.4" font-family="Liberation Serif" font-size="12.2" fill="#f2f2f2">600</text>
<line x1="0" y1="479.28" x2="4" y2="479.28" stroke="#f2f2f2" stroke-width="1"/>
<line x1="0" y1="484.70" x2="4" y2="484.70" stroke="#f2f2f2" stroke-width="1"/>
<line x1="0" y1="490.12" x2="4" y2="490.12" stroke="#f2f2f2" stroke-width="1"/>
<line x1="0" y1="495.55" x2="4" y2="495.55" stroke="#f2f2f2" stroke-width="1"/>
<line x1="0" y1="500.97" x2="4" y2="500.97" stroke="#f2f2f2" stroke-width="1"/>
<line x1="0" y1="506.39" x2="4" y2="506.39" stroke="#f2f2f2" stroke-width="1"/>
<line x1="0" y1="511.81" x2="4" y2="511.81" stroke="#f2f2f2" stroke-width="1"/>
<line x1="0" y1="517.24" x2="4" y2="517.24" stroke="#f2f2f2" stroke-width="1"/>
<line x1="0" y1="522.66" x2="4" y2="522.66" stroke="#f2f2f2" stroke-width="1"/>
<line x1="0" y1="528.08" x2="14" y2="528.08" stroke="#f2f2f2" stroke-width="1"/>
<text x="8" y="541.6" font-family="Liberation Serif" font-size="12.2" fill="#f2f2f2">700</text>
<line x1="0" y1="533.50" x2="4" y2="533.50" stroke="#f2f2f2" stroke-width="1"/>
<line x1="0" y1="538.93" x2="4" y2="538.93" stroke="#f2f2f2" stroke-width="1"/>
<line x1="0" y1="544.35" x2="4" y2="544.35" stroke="#f2f2f2" stroke-width="1"/>
<line x1="0" y1="549.77" x2="4" y2="549.77" stroke="#f2f2f2" stroke-width="1"/>
<line x1="0" y1="555.19" x2="4" y2="555.19" stroke="#f2f2f2" stroke-width="1"/>
<line x1="0" y1="560.62" x2="4" y2="560.62" stroke="#f2f2f2" stroke-width="1"/>
<line x1="0" y1="566.04" x2="4" y2="566.04" stroke="#f2f2f2" stroke-width="1"/>
<line x1="0" y1="571.46" x2="4" y2="571.46" stroke="#f2f2f2" stroke-width="1"/>
<line x1="0" y1="576.89" x2="4" y2="576.89" stroke="#f2f2f2" stroke-width="1"/>
<line x1="0" y1="582.31" x2="14" y2="582.31" stroke="#f2f2f2" stroke-width="1"/>
<text x="8" y="595.8" font-family="Liberation Serif" font-size="12.2" fill="#f2f2f2">800</text>
<line x1="0" y1="587.73" x2="4" y2="587.73" stroke="#f2f2f2" stroke-width="1"/>
<line x1="0" y1="593.15" x2="4" y2="593.15" stroke="#f2f2f2" stroke-width="1"/>
<line x1="0" y1="598.58" x2="4" y2="598.58" stroke="#f2f2f2" stroke-width="1"/>
<line x1="0" y1="604.00" x2="4" y2="604.00" stroke="#f2f2f2" stroke-width="1"/>
<line x1="0" y1="609.42" x2="4" y2="609.42" stroke="#f2f2f2" stroke-width="1"/>
<line x1="0" y1="614.84" x2="4" y2="614.84" stroke="#f2f2f2" stroke-width="1"/>
<line x1="0" y1="620.27" x2="4" y2="620.27" stroke="#f2f2f2" stroke-width="1"/>
<line x1="0" y1="625.69" x2="4" y2="625.69" stroke="#f2f2f2" stroke-width="1"/>
<line x1="0" y1="631.11" x2="4" y2="631.11" stroke="#f2f2f2" stroke-width="1"/>
<line x1="0" y1="636.53" x2="14" y2="636.53" stroke="#f2f2f2" stroke-width="1"/>
<text x="8" y="650.0" font-family="Liberation Serif" font-size="12.2" fill="#f2f2f2">900</text>
<line x1="0" y1="641.96" x2="4" y2="641.96" stroke="#f2f2f2" stroke-width="1"/>
<line x1="0" y1="647.38" x2="4" y2="647.38" stroke="#f2f2f2" stroke-width="1"/>
<line x1="0" y1="652.80" x2="4" y2="652.80" stroke="#f2f2f2" stroke-width="1"/>
<line x1="0" y1="658.22" x2="4" y2="658.22" stroke="#f2f2f2" stroke-width="1"/>
<line x1="0" y1="663.65" x2="4" y2="663.65" stroke="#f2f2f2" stroke-width="1"/>
<line x1="0" y1="669.07" x2="4" y2="669.07" stroke="#f2f2f2" stroke-width="1"/>
<line x1="0" y1="674.49" x2="4" y2="674.49" stroke="#f2f2f2" stroke-width="1"/>
<line x1="0" y1="679.91" x2="4" y2="679.91" stroke="#f2f2f2" stroke-width="1"/>
<line x1="0" y1="685.34" x2="4" y2="685.34" stroke="#f2f2f2" stroke-width="1"/>
<line x1="0" y1="690.76" x2="14" y2="690.76" stroke="#f2f2f2" stroke-width="1"/>
<text x="8" y="704.3" font-family="Liberation Serif" font-size="12.2" fill="#f2f2f2">1000</text>
<line x1="0" y1="696.18" x2="4" y2="696.18" stroke="#f2f2f2" stroke-width="1"/>
<line x1="0" y1="701.61" x2="4" y2="701.61" stroke="#f2f2f2" stroke-width="1"/>
<line x1="0" y1="707.03" x2="4" y2="707.03" stroke="#f2f2f2" stroke-width="1"/>
<line x1="0" y1="712.45" x2="4" y2="712.45" stroke="#f2f2f2" stroke-width="1"/>
<line x1="0" y1="717.87" x2="4" y2="717.87" stroke="#f2f2f2" stroke-width="1"/>
<line x1="0" y1="723.30" x2="4" y2="723.30" stroke="#f2f2f2" stroke-width="1"/>
<line x1="0" y1="728.72" x2="4" y2="728.72" stroke="#f2f2f2" stroke-width="1"/>
<line x1="0" y1="734.14" x2="4" y2="734.14" stroke="#f2f2f2" stroke-width="1"/>
<line x1="0" y1="739.56" x2="4" y2="739.56" stroke="#f2f2f2" stroke-width="1"/>
<line x1="0" y1="744.99" x2="14" y2="744.99" stroke="#f2f2f2" stroke-width="1"/>
<text x="8" y="758.5" font-family="Liberation Serif" font-size="12.2" fill="#f2f2f2">1100</text>
<line x1="0" y1="750.41" x2="4" y2="750.41" stroke="#f2f2f2" stroke-width="1"/>
<line x1="0" y1="755.83" x2="4" y2="755.83" stroke="#f2f2f2" stroke-width="1"/>
<line x1="0" y1="761.25" x2="4" y2="761.25" stroke="#f2f2f2" stroke-width="1"/>
<line x1="0" y1="766.68" x2="4" y2="766.68" stroke="#f2f2f2" stroke-width="1"/>
<line x1="0" y1="772.10" x2="4" y2="772.10" stroke="#f2f2f2" stroke-width="1"/>
<line x1="525.5" y1="101" x2="525.5" y2="773" stroke="#222" stroke-width="5" stroke-dasharray="18 9"/>
<line x1="148" y1="112" x2="148" y2="773" stroke="#2670b8" stroke-width="2" stroke-dasharray="5 3.8"/>
<rect x="28.5" y="162.5" width="986.5" height="555" fill="none" stroke="#000" stroke-opacity="0.38" stroke-width="1.5" stroke-dasharray="4 4.5"/>
<g opacity="0.36"><rect x="34.5" y="170.5" width="11" height="9" rx="1" fill="none" stroke="#333" stroke-width="1"/><path d="M45.5 173.5l3-2.5v8l-3-2.5" fill="none" stroke="#333" stroke-width="1"/><text x="55" y="178.8" font-family="Liberation Sans" font-size="11" fill="#333">Default</text></g>
<g filter="url(#sh)"><line x1="240.8" y1="357.6" x2="286.4" y2="393.1" stroke="#fff" stroke-width="11" stroke-linecap="round"/><line x1="189.2" y1="391.4" x2="282.2" y2="427.7" stroke="#fff" stroke-width="11" stroke-linecap="round"/><line x1="212.5" y1="435.7" x2="270.3" y2="443.8" stroke="#fff" stroke-width="11" stroke-linecap="round"/><line x1="178.7" y1="463.2" x2="283.8" y2="466.6" stroke="#fff" stroke-width="11" stroke-linecap="round"/><line x1="235.7" y1="501.2" x2="276.7" y2="489.4" stroke="#fff" stroke-width="11" stroke-linecap="round"/><line x1="191.3" y1="548.5" x2="280.9" y2="513.9" stroke="#fff" stroke-width="11" stroke-linecap="round"/><line x1="242" y1="556.1" x2="283" y2="531.6" stroke="#fff" stroke-width="11" stroke-linecap="round"/><line x1="241.6" y1="612.7" x2="305" y2="557.8" stroke="#fff" stroke-width="11" stroke-linecap="round"/><line x1="273.7" y1="616.1" x2="304.1" y2="586.5" stroke="#fff" stroke-width="11" stroke-linecap="round"/><line x1="288.5" y1="668.9" x2="335" y2="601.3" stroke="#fff" stroke-width="11" stroke-linecap="round"/><line x1="330.3" y1="645.7" x2="343" y2="613.2" stroke="#fff" stroke-width="11" stroke-linecap="round"/><line x1="240.8" y1="357.6" x2="286.4" y2="393.1" stroke="#111" stroke-width="6"/><line x1="189.2" y1="391.4" x2="282.2" y2="427.7" stroke="#111" stroke-width="6"/><line x1="212.5" y1="435.7" x2="270.3" y2="443.8" stroke="#111" stroke-width="6"/><line x1="178.7" y1="463.2" x2="283.8" y2="466.6" stroke="#111" stroke-width="6"/><line x1="235.7" y1="501.2" x2="276.7" y2="489.4" stroke="#111" stroke-width="6"/><line x1="191.3" y1="548.5" x2="280.9" y2="513.9" stroke="#111" stroke-width="6"/><line x1="242" y1="556.1" x2="283" y2="531.6" stroke="#111" stroke-width="6"/><line x1="241.6" y1="612.7" x2="305" y2="557.8" stroke="#111" stroke-width="6"/><line x1="273.7" y1="616.1" x2="304.1" y2="586.5" stroke="#111" stroke-width="6"/><line x1="288.5" y1="668.9" x2="335" y2="601.3" stroke="#111" stroke-width="6"/><line x1="330.3" y1="645.7" x2="343" y2="613.2" stroke="#111" stroke-width="6"/></g>
<g filter="url(#sh)"><circle cx="522.5" cy="428" r="215" fill="none" stroke="#fff" stroke-width="12"/><circle cx="522.5" cy="428" r="215" fill="none" stroke="#222" stroke-width="5.2"/></g>
<circle cx="524" cy="431" r="220.5" fill="none" stroke="#000" stroke-opacity="0.28" stroke-width="0.9"/>
<circle cx="521.5" cy="426.5" r="207" fill="none" stroke="#000" stroke-opacity="0.4" stroke-width="0.9"/>
<circle cx="525.75" cy="429.2" r="202" fill="#fff"/>
<circle cx="525.75" cy="429.2" r="200.5" fill="#fdbd00"/>
<path d="M403.2,332.1 L403.2,332.1 L403.2,332.1 L403.2,332.1 L403.2,332.1 L403.2,332.1 L404.8,332.4 L408.0,333.0 L412.9,333.9 L419.3,335.2 L424.2,336.1 L427.4,336.7 L429.0,337.0 L429.0,337.0 L429.0,337.0 L429.0,337.0 L429.0,337.0 L429.0,337.0 L429.5,337.5 L430.4,338.4 L431.7,339.8 L433.6,341.6 L435.2,348.1 L436.8,359.1 L438.2,374.8 L439.4,395.1 L440.4,410.3 L441.0,420.4 L441.3,425.5 L441.3,425.5 L441.3,425.5 L441.3,425.5 L441.3,425.5 L441.3,425.5 L444.4,424.7 L450.5,423.2 L459.7,420.9 L472.0,417.8 L481.2,415.5 L487.3,414.0 L490.4,413.2 L490.4,413.2 L490.4,413.2 L490.4,413.2 L490.4,413.2 L490.4,413.2 L490.7,409.1 L491.3,400.8 L492.2,388.3 L493.5,371.8 L494.9,358.4 L496.6,348.3 L498.5,341.3 L500.7,337.6 L503.1,335.2 L505.9,333.9 L509.0,333.9 L512.3,335.2 L515.6,336.8 L518.9,339.0 L522.0,341.6 L525.1,344.7 L527.5,350.7 L529.2,359.6 L530.2,371.4 L530.5,386.2 L530.8,397.2 L530.9,404.6 L531.0,408.3 L531.0,408.3 L531.0,408.3 L531.0,408.3 L531.0,408.3 L531.0,408.3 L532.0,408.6 L534.0,409.2 L537.0,410.1 L540.9,411.4 L544.7,413.1 L548.2,415.4 L551.5,418.3 L554.6,421.6 L556.4,424.6 L557.0,427.2 L556.4,429.5 L554.6,431.3 L551.9,432.9 L548.4,434.3 L544.0,435.5 L538.8,436.4 L534.9,437.1 L532.3,437.6 L531.0,437.8 L531.0,437.8 L531.0,437.8 L531.0,437.8 L531.0,437.8 L531.0,437.8 L530.8,443.3 L530.3,454.4 L529.6,471.0 L528.6,493.1 L527.3,509.9 L525.6,521.6 L523.5,528.0 L521.1,529.3 L518.3,529.7 L515.3,529.4 L511.9,528.4 L508.2,526.5 L504.8,521.0 L501.8,511.8 L499.0,498.9 L496.6,482.3 L494.7,469.8 L493.5,461.5 L492.9,457.4 L492.9,457.4 L492.9,457.4 L492.9,457.4 L492.9,457.4 L492.9,457.4 L489.7,458.2 L483.4,459.7 L474.0,462.0 L461.4,465.1 L452.0,467.4 L445.6,468.9 L442.5,469.7 L442.5,469.7 L442.5,469.7 L442.5,469.7 L442.5,469.7 L442.5,469.7 L442.6,472.8 L442.7,478.9 L443.0,488.1 L443.2,500.4 L443.9,510.1 L445.0,517.1 L446.5,521.6 L448.3,523.4 L448.8,525.4 L447.9,527.6 L445.6,529.9 L441.9,532.3 L438.0,533.7 L434.0,534.0 L429.9,533.3 L425.6,531.4 L421.7,526.8 L418.3,519.5 L415.4,509.4 L413.0,496.5 L411.1,486.8 L409.9,480.3 L409.3,477.1 L409.3,477.1 L409.3,477.1 L409.3,477.1 L409.3,477.1 L409.3,477.1 L407.8,476.0 L404.7,473.9 L400.1,470.6 L393.9,466.4 L389.2,462.5 L386.0,459.1 L384.2,456.2 L384.0,453.7 L384.9,451.4 L387.0,449.2 L390.4,447.3 L395.0,445.4 L398.4,444.1 L400.7,443.2 L401.9,442.7 L401.9,442.7 L401.9,442.7 L401.9,442.7 L401.9,442.7 L401.9,442.7 L401.9,435.9 L401.9,422.4 L401.9,402.2 L401.9,375.1 L401.9,354.9 L401.9,341.4 L401.9,334.6 L401.9,334.6 L401.9,334.6 L401.9,334.6 L401.9,334.6 L401.9,334.6 L402.0,334.4 L402.1,334.1 L402.4,333.7 L402.7,333.0 L403.0,332.6 L403.1,332.3Z" fill="#fff" stroke="#fff" stroke-width="8" stroke-linejoin="round" filter="url(#sh)"/>
<path d="M403.2,332.1 L403.2,332.1 L403.2,332.1 L403.2,332.1 L403.2,332.1 L403.2,332.1 L404.8,332.4 L408.0,333.0 L412.9,333.9 L419.3,335.2 L424.2,336.1 L427.4,336.7 L429.0,337.0 L429.0,337.0 L429.0,337.0 L429.0,337.0 L429.0,337.0 L429.0,337.0 L429.5,337.5 L430.4,338.4 L431.7,339.8 L433.6,341.6 L435.2,348.1 L436.8,359.1 L438.2,374.8 L439.4,395.1 L440.4,410.3 L441.0,420.4 L441.3,425.5 L441.3,425.5 L441.3,425.5 L441.3,425.5 L441.3,425.5 L441.3,425.5 L444.4,424.7 L450.5,423.2 L459.7,420.9 L472.0,417.8 L481.2,415.5 L487.3,414.0 L490.4,413.2 L490.4,413.2 L490.4,413.2 L490.4,413.2 L490.4,413.2 L490.4,413.2 L490.7,409.1 L491.3,400.8 L492.2,388.3 L493.5,371.8 L494.9,358.4 L496.6,348.3 L498.5,341.3 L500.7,337.6 L503.1,335.2 L505.9,333.9 L509.0,333.9 L512.3,335.2 L515.6,336.8 L518.9,339.0 L522.0,341.6 L525.1,344.7 L527.5,350.7 L529.2,359.6 L530.2,371.4 L530.5,386.2 L530.8,397.2 L530.9,404.6 L531.0,408.3 L531.0,408.3 L531.0,408.3 L531.0,408.3 L531.0,408.3 L531.0,408.3 L532.0,408.6 L534.0,409.2 L537.0,410.1 L540.9,411.4 L544.7,413.1 L548.2,415.4 L551.5,418.3 L554.6,421.6 L556.4,424.6 L557.0,427.2 L556.4,429.5 L554.6,431.3 L551.9,432.9 L548.4,434.3 L544.0,435.5 L538.8,436.4 L534.9,437.1 L532.3,437.6 L531.0,437.8 L531.0,437.8 L531.0,437.8 L531.0,437.8 L531.0,437.8 L531.0,437.8 L530.8,443.3 L530.3,454.4 L529.6,471.0 L528.6,493.1 L527.3,509.9 L525.6,521.6 L523.5,528.0 L521.1,529.3 L518.3,529.7 L515.3,529.4 L511.9,528.4 L508.2,526.5 L504.8,521.0 L501.8,511.8 L499.0,498.9 L496.6,482.3 L494.7,469.8 L493.5,461.5 L492.9,457.4 L492.9,457.4 L492.9,457.4 L492.9,457.4 L492.9,457.4 L492.9,457.4 L489.7,458.2 L483.4,459.7 L474.0,462.0 L461.4,465.1 L452.0,467.4 L445.6,468.9 L442.5,469.7 L442.5,469.7 L442.5,469.7 L442.5,469.7 L442.5,469.7 L442.5,469.7 L442.6,472.8 L442.7,478.9 L443.0,488.1 L443.2,500.4 L443.9,510.1 L445.0,517.1 L446.5,521.6 L448.3,523.4 L448.8,525.4 L447.9,527.6 L445.6,529.9 L441.9,532.3 L438.0,533.7 L434.0,534.0 L429.9,533.3 L425.6,531.4 L421.7,526.8 L418.3,519.5 L415.4,509.4 L413.0,496.5 L411.1,486.8 L409.9,480.3 L409.3,477.1 L409.3,477.1 L409.3,477.1 L409.3,477.1 L409.3,477.1 L409.3,477.1 L407.8,476.0 L404.7,473.9 L400.1,470.6 L393.9,466.4 L389.2,462.5 L386.0,459.1 L384.2,456.2 L384.0,453.7 L384.9,451.4 L387.0,449.2 L390.4,447.3 L395.0,445.4 L398.4,444.1 L400.7,443.2 L401.9,442.7 L401.9,442.7 L401.9,442.7 L401.9,442.7 L401.9,442.7 L401.9,442.7 L401.9,435.9 L401.9,422.4 L401.9,402.2 L401.9,375.1 L401.9,354.9 L401.9,341.4 L401.9,334.6 L401.9,334.6 L401.9,334.6 L401.9,334.6 L401.9,334.6 L401.9,334.6 L402.0,334.4 L402.1,334.1 L402.4,333.7 L402.7,333.0 L403.0,332.6 L403.1,332.3Z" fill="#262626" stroke="#262626" stroke-width="1.5" stroke-linejoin="round"/>
<path d="M573.3,390.9 L573.3,390.9 L573.3,390.9 L573.3,390.9 L573.3,390.9 L573.3,390.9 L573.8,390.5 L574.8,389.6 L576.3,388.3 L578.2,386.5 L581.7,384.9 L586.7,383.3 L593.1,381.9 L601.1,380.6 L608.1,379.8 L614.3,379.4 L619.6,379.6 L624.1,380.2 L628.1,381.4 L631.8,383.2 L635.0,385.5 L637.9,388.4 L639.9,390.9 L641.1,393.1 L641.5,395.0 L641.1,396.6 L639.9,398.0 L638.0,399.2 L635.4,400.2 L632.1,401.1 L629.7,401.7 L628.0,402.2 L627.2,402.4 L627.2,402.4 L627.2,402.4 L627.2,402.4 L627.2,402.4 L627.2,402.4 L627.4,405.3 L627.7,411.0 L628.2,419.6 L628.8,431.1 L629.2,442.5 L629.3,453.6 L629.1,464.6 L628.7,475.5 L628.3,483.6 L628.1,489.0 L628.0,491.7 L628.0,491.7 L628.0,491.7 L628.0,491.7 L628.0,491.7 L628.0,491.7 L628.8,492.0 L630.5,492.5 L633.0,493.3 L636.3,494.5 L639.7,495.7 L643.3,497.2 L646.9,498.8 L650.7,500.5 L653.6,502.3 L655.7,504.1 L657.0,505.8 L657.4,507.6 L656.8,509.4 L655.2,511.4 L652.5,513.5 L648.7,515.8 L644.4,517.9 L639.4,519.9 L633.8,521.7 L627.6,523.5 L621.3,525.2 L614.9,526.8 L608.4,528.4 L601.7,530.0 L595.8,530.6 L590.6,530.4 L586.2,529.3 L582.4,527.4 L579.5,525.3 L577.4,523.2 L576.1,521.1 L575.7,518.8 L575.9,516.7 L576.9,514.7 L578.6,512.9 L581.1,511.1 L583.9,509.4 L587.1,507.6 L590.7,505.8 L594.6,504.1 L597.6,502.7 L599.6,501.8 L600.6,501.4 L600.6,501.4 L600.6,501.4 L600.6,501.4 L600.6,501.4 L600.6,501.4 L600.4,499.2 L599.9,494.8 L599.3,488.1 L598.4,479.3 L597.5,469.3 L596.5,458.3 L595.5,446.1 L594.4,432.9 L593.5,422.9 L593.0,416.3 L592.7,413.0 L592.7,413.0 L592.7,413.0 L592.7,413.0 L592.7,413.0 L592.7,413.0 L592.3,412.8 L591.5,412.3 L590.4,411.7 L588.8,410.8 L586.9,409.5 L584.6,407.7 L581.8,405.5 L578.8,402.9 L576.4,400.4 L574.7,398.1 L573.8,395.9 L573.6,393.9 L573.5,392.4 L573.3,391.4Z" fill="#fff" stroke="#fff" stroke-width="8" stroke-linejoin="round" filter="url(#sh)"/>
<path d="M573.3,390.9 L573.3,390.9 L573.3,390.9 L573.3,390.9 L573.3,390.9 L573.3,390.9 L573.8,390.5 L574.8,389.6 L576.3,388.3 L578.2,386.5 L581.7,384.9 L586.7,383.3 L593.1,381.9 L601.1,380.6 L608.1,379.8 L614.3,379.4 L619.6,379.6 L624.1,380.2 L628.1,381.4 L631.8,383.2 L635.0,385.5 L637.9,388.4 L639.9,390.9 L641.1,393.1 L641.5,395.0 L641.1,396.6 L639.9,398.0 L638.0,399.2 L635.4,400.2 L632.1,401.1 L629.7,401.7 L628.0,402.2 L627.2,402.4 L627.2,402.4 L627.2,402.4 L627.2,402.4 L627.2,402.4 L627.2,402.4 L627.4,405.3 L627.7,411.0 L628.2,419.6 L628.8,431.1 L629.2,442.5 L629.3,453.6 L629.1,464.6 L628.7,475.5 L628.3,483.6 L628.1,489.0 L628.0,491.7 L628.0,491.7 L628.0,491.7 L628.0,491.7 L628.0,491.7 L628.0,491.7 L628.8,492.0 L630.5,492.5 L633.0,493.3 L636.3,494.5 L639.7,495.7 L643.3,497.2 L646.9,498.8 L650.7,500.5 L653.6,502.3 L655.7,504.1 L657.0,505.8 L657.4,507.6 L656.8,509.4 L655.2,511.4 L652.5,513.5 L648.7,515.8 L644.4,517.9 L639.4,519.9 L633.8,521.7 L627.6,523.5 L621.3,525.2 L614.9,526.8 L608.4,528.4 L601.7,530.0 L595.8,530.6 L590.6,530.4 L586.2,529.3 L582.4,527.4 L579.5,525.3 L577.4,523.2 L576.1,521.1 L575.7,518.8 L575.9,516.7 L576.9,514.7 L578.6,512.9 L581.1,511.1 L583.9,509.4 L587.1,507.6 L590.7,505.8 L594.6,504.1 L597.6,502.7 L599.6,501.8 L600.6,501.4 L600.6,501.4 L600.6,501.4 L600.6,501.4 L600.6,501.4 L600.6,501.4 L600.4,499.2 L599.9,494.8 L599.3,488.1 L598.4,479.3 L597.5,469.3 L596.5,458.3 L595.5,446.1 L594.4,432.9 L593.5,422.9 L593.0,416.3 L592.7,413.0 L592.7,413.0 L592.7,413.0 L592.7,413.0 L592.7,413.0 L592.7,413.0 L592.3,412.8 L591.5,412.3 L590.4,411.7 L588.8,410.8 L586.9,409.5 L584.6,407.7 L581.8,405.5 L578.8,402.9 L576.4,400.4 L574.7,398.1 L573.8,395.9 L573.6,393.9 L573.5,392.4 L573.3,391.4Z" fill="#262626" stroke="#262626" stroke-width="1.5" stroke-linejoin="round"/>
<g opacity="0.75"><line x1="560" y1="441.3" x2="570" y2="441.3" stroke="#f3e9b0" stroke-width="1.2"/><line x1="590" y1="441.3" x2="613" y2="441.3" stroke="#e8e0c0" stroke-width="1.2"/><line x1="579.8" y1="410" x2="579.8" y2="431" stroke="#f3e9b0" stroke-width="1.2"/><line x1="579.8" y1="452" x2="579.8" y2="474" stroke="#f3e9b0" stroke-width="1.2"/><circle cx="579.8" cy="441.3" r="4" fill="#f5e08a"/></g>
<path d="M410,773 L423,194 L1160,210" fill="none" stroke="#fff" stroke-opacity="0.6" stroke-width="1.6" stroke-dasharray="4 4.5" stroke-dashoffset="4.25"/>
<path d="M410,773 L423,194 L1160,210" fill="none" stroke="#000" stroke-opacity="0.38" stroke-width="1.6" stroke-dasharray="4 4.5"/>
<line x1="1141" y1="110" x2="1127" y2="773" stroke="#000" stroke-opacity="0.45" stroke-width="2" stroke-dasharray="6 6"/>
<rect x="381" y="272" width="334" height="318" fill="none" stroke="#3a7fd5" stroke-opacity="0.9" stroke-width="1.1" stroke-dasharray="3 2"/>
<rect x="376.5" y="267.5" width="9" height="9" fill="#fff" stroke="#3a7fd5" stroke-width="2"/>
<rect x="710.5" y="267.5" width="9" height="9" fill="#fff" stroke="#3a7fd5" stroke-width="2"/>
<rect x="376.5" y="585.5" width="9" height="9" fill="#fff" stroke="#3a7fd5" stroke-width="2"/>
<rect x="710.5" y="585.5" width="9" height="9" fill="#fff" stroke="#3a7fd5" stroke-width="2"/>
<line x1="547.8" y1="253" x2="547.8" y2="268" stroke="#3a7fd5" stroke-width="1.3"/>
<circle cx="547.8" cy="272" r="4" fill="#fff" stroke="#3a7fd5" stroke-width="1.5"/>
<path d="M551.5,250 A5,5 0 1 1 551,244.5" fill="#fff" stroke="#3a7fd5" stroke-width="1.8"/><path d="M549,244 l5,-2 l-0.5,5z" fill="#3a7fd5"/>
<rect x="725.5" y="272.5" width="23" height="23" fill="#e3eefb" stroke="#4a8ad8" stroke-width="1"/>
<path d="M731,279 h-1.5 v10 h1.5 M743,279 h1.5 v10 h-1.5" fill="none" stroke="#4a8ad8" stroke-width="1"/><path d="M733,288 l1,-3.5 l5,-5 l2.5,2.5 l-5,5z" fill="#3a7fd5"/>
<circle cx="27" cy="418.7" r="19.2" fill="#2b8ae6"/><path d="M18,412.5h18M18,418.5h18M18,424.5h18M21.5,409.5v18M27.3,409.5v18M33,409.5v18" stroke="#fff" stroke-width="2"/>
<circle cx="27" cy="466.7" r="19.2" fill="#2b8ae6"/><rect x="19" y="458.5" width="16.5" height="16.5" fill="none" stroke="#fff" stroke-width="2"/><path d="M19,463h16.5M23,458.5v16.5" stroke="#fff" stroke-width="1.5"/><path d="M25,460v2M27.5,460v2M30,460v2M32.5,460v2M20,465h2M20,467.5h2M20,470h2M20,472.5h2" stroke="#fff" stroke-width="0.8"/>
<circle cx="27" cy="514.6" r="19.2" fill="#e6e6e6"/><path d="M35,512 V506.5 H19 V523 H26" fill="none" stroke="#444" stroke-width="2"/><path d="M19,510.5h16M23,507v16" stroke="#444" stroke-width="1.5"/><path d="M25.5,507.5v2M28,507.5v2M30.5,507.5v2M33,507.5v2M20,513h2M20,515.5h2M20,518h2M20,520.5h2" stroke="#444" stroke-width="0.9"/><path d="M31,512.5l4,2.2v4.6l-4,2.2l-4,-2.2v-4.6z" fill="#444"/><circle cx="31" cy="517" r="1.5" fill="#e6e6e6"/>
<circle cx="1134" cy="323.1" r="19" fill="#e6e6e6"/>
<circle cx="1134" cy="370.4" r="19" fill="#e6e6e6"/>
<circle cx="1134" cy="418.3" r="19" fill="#e6e6e6"/>
<circle cx="1134" cy="466.8" r="19" fill="#2b8ae6"/>
<circle cx="1134" cy="515" r="19" fill="#e6e6e6"/>
<circle cx="1134" cy="562.6" r="19" fill="#e6e6e6"/>
<path d="M1125.5,319.1 h4 l1.5,-2.5 h5 l1.5,2.5 h2 v4 M1141,324.1 v0" fill="none" stroke="#555" stroke-width="1.6"/><path d="M1125.5,319.1 v10 h10" fill="none" stroke="#555" stroke-width="1.6"/><circle cx="1133" cy="323.6" r="2.8" fill="none" stroke="#555" stroke-width="1.6"/><path d="M1139,325.6 v6 M1136,328.6 h6" stroke="#555" stroke-width="1.6"/>
<path d="M1125.5,370.4 a8.5,8.5 0 0 1 14.5,-6 M1142.5,370.4 a8.5,8.5 0 0 1 -14.5,6" fill="none" stroke="#555" stroke-width="1.6"/><path d="M1141.5,361.4 v5 h-5z M1126.5,379.4 v-5 h5z" fill="#555"/><rect x="1130" y="367.4" width="8" height="6" fill="none" stroke="#555" stroke-width="1.6"/>
<rect x="1126.5" y="417.3" width="14" height="9" fill="none" stroke="#555" stroke-width="1.8"/><path d="M1129.5,417.3 v-3.5 a4,4 0 0 1 8,0" fill="none" stroke="#555" stroke-width="1.8"/>
<text x="1134" y="471.5" text-anchor="middle" font-family="Liberation Sans" font-weight="bold" font-size="12.5" fill="#fff">16:9</text>
<text x="1134" y="519.5" text-anchor="middle" font-family="Liberation Sans" font-weight="bold" font-size="12.5" fill="#555">9:16</text>
<path d="M1129,565.6 l9,-9 l3,3 l-9,9 h-3z" fill="none" stroke="#555" stroke-width="1.6" stroke-linejoin="round"/><path d="M1125.5,571.1 h17" stroke="#555" stroke-width="1.6"/>
<path d="M1161,397 C1161,408 1144,414 1144,428 V458 C1144,472 1161,476 1161,487 Z" fill="#fff"/>
<path d="M1149.2,435.5v11" stroke="#777" stroke-width="1.8"/><path d="M1152,435.5l6,5.5l-6,5.5z" fill="#777"/>
<path d="M530,773 C545,773 550,756 565,756 H595 C610,756 615,773 630,773 Z" fill="#fff"/>
<rect x="574" y="760" width="12" height="1.8" fill="#888"/><path d="M574,764l6,6l6,-6z" fill="#888"/>
</svg></div>
<div id="rp" class="a"><div class="a" style="left:0;top:0;width:396px;height:1px;background:#dcdcdc;z-index:2"></div><div class="a" style="left:1px;top:0;width:65px;height:41px;background:#eeeeee"></div>
<div class="a" style="left:67px;top:0;width:66px;height:41px;background:#eeeeee"></div>
<div class="a" style="left:133px;top:0;width:65px;height:41px;background:#fff"></div>
<div class="a" style="left:199px;top:0;width:66px;height:41px;background:#eeeeee"></div>
<div class="a" style="left:265px;top:0;width:65px;height:41px;background:#eeeeee"></div>
<div class="a" style="left:331px;top:0;width:65px;height:41px;background:#eeeeee"></div>
<div class="a" style="left:66px;top:0;width:1px;height:41px;background:#dedede"></div>
<div class="a" style="left:264px;top:0;width:1px;height:41px;background:#dedede"></div>
<div class="a" style="left:330px;top:0;width:1px;height:41px;background:#dedede"></div>
<svg class="a" style="left:10px;top:14px" width="16" height="14" viewBox="0 0 16 14" fill="none" stroke="#555" stroke-width="1.6"><rect x="1" y="1" width="14" height="12" rx="1"/><circle cx="4.5" cy="4.5" r="1.2" fill="#555" stroke="none"/><path d="M2 12l5-5 3 3 2-2 3 3"/></svg>
<span class="a" style="left:29px;top:15px;font-size:10.5px;letter-spacing:-0.4px;color:#333">Image</span>
<svg class="a" style="left:76px;top:13px" width="17" height="16" viewBox="0 0 17 16" fill="none" stroke="#555" stroke-width="1.6"><path d="M4 10H1V1h9v3"/><circle cx="10.5" cy="10" r="4.8"/></svg>
<span class="a" style="left:95px;top:15px;font-size:10.5px;letter-spacing:-0.5px;color:#333">Shape</span>
<svg class="a" style="left:148px;top:14px" width="13" height="13" viewBox="0 0 13 13" fill="#1a6fc4"><path d="M0 0h13v3.5h-1.2L11 1.6H7.6v9.6l1.8.5V13H3.6v-1.3l1.8-.5V1.6H2L1.2 3.5H0z"/></svg>
<span class="a" style="left:166px;top:15px;font-size:10.5px;letter-spacing:-0.3px;color:#1a6fc4">Text</span>
<svg class="a" style="left:199px;top:12px" width="15" height="16" viewBox="0 0 15 16" fill="none" stroke="#555" stroke-width="1.5"><path d="M8 1.5l1.5 3 3.5.3-2.6 2.4.8 3.4L8 9l-3 1.6.7-3.4L3 4.8l3.5-.3z"/><path d="M5 9.5L1 14.5" stroke-width="2"/></svg>
<span class="a" style="left:218px;top:15px;font-size:10.5px;letter-spacing:-0.5px;color:#333">Decoration</span>
<svg class="a" style="left:274px;top:13px" width="15" height="16" viewBox="0 0 15 16" fill="none" stroke="#555" stroke-width="1.5"><path d="M3 3a8 8 0 0 0 0 10M12.5 3a8 8 0 0 1 0 10"/><circle cx="6.8" cy="10.5" r="2.2"/><path d="M9 10.5V2.5h2.5"/></svg>
<span class="a" style="left:292px;top:15px;font-size:10.5px;letter-spacing:-0.4px;color:#333">Sound</span>
<svg class="a" style="left:342px;top:14px" width="14" height="14" viewBox="0 0 14 14" fill="none" stroke="#555" stroke-width="1.6"><rect x="1" y="1" width="4.5" height="4.5"/><rect x="8.5" y="1" width="4.5" height="4.5"/><rect x="1" y="8.5" width="4.5" height="4.5"/><rect x="8.5" y="8.5" width="4.5" height="4.5"/></svg>
<span class="a" style="left:359px;top:15px;font-size:10.5px;letter-spacing:-0.5px;color:#333">Library</span>
<div class="a" style="left:0;top:41px;width:1px;height:276px;background:#c8c8c8"></div><div class="a" style="left:0;top:406px;width:1px;height:285px;background:#c8c8c8"></div>
<div class="a" style="left:390px;top:41px;width:6px;height:451px;background:#c4c4c4;border-radius:3px 3px 3px 3px"></div>
<span class="a" style="left:16px;top:48px;font-size:13px;font-weight:bold;color:#222">Action Info</span>
<span class="a" style="left:17px;top:83px;font-size:12px;color:#222;">Layer Info</span>
<span class="a" style="left:17px;top:113px;font-size:12px;color:#222;">Action Info</span>
<span class="a" style="left:17px;top:143px;font-size:12px;color:#222;">Time Info</span>
<span class="a" style="left:17px;top:173px;font-size:12px;color:#222;">Position Info</span>
<span class="a" style="left:17px;top:203px;font-size:12px;color:#222;">Size Info</span>
<span class="a" style="left:17px;top:233px;font-size:12px;color:#222;">Rotation Info</span>
<span class="a" style="left:103px;top:83px;font-size:12px;color:#222;">Current layer</span>
<span class="a" style="left:183px;top:81px;font-size:15px;font-family:Liberation Serif,serif;color:#666">8</span>
<span class="a" style="left:206px;top:83px;font-size:12px;color:#222;">Layer</span>
<span class="a" style="left:103px;top:113px;font-size:12px;color:#222;">Emphasis Effect&gt;</span>
<span class="a" style="left:212px;top:113px;font-size:12px;color:#222;color:#3f7fd0">Tada</span>
<svg class="a" style="left:245px;top:113px" width="13" height="13" viewBox="0 0 13 13"><path d="M2 9.5L8.5 3l1.8 1.8L3.8 11.3H2z" fill="#2a6ccf"/><path d="M9.3 2.2l1-1 1.8 1.8-1 1z" fill="#2a6ccf"/><path d="M1 12.3h11" stroke="#2a6ccf" stroke-width="1"/></svg>
<span class="a" style="left:103px;top:144px;font-size:12px;color:#222;">Start</span>
<span class="a" style="left:200px;top:144px;font-size:12px;color:#222;">End</span>
<span class="a" style="left:296px;top:144px;font-size:12px;color:#222;">Total</span>
<span class="a" style="left:103px;top:174px;font-size:12px;color:#222;">X</span>
<span class="a" style="left:199px;top:174px;font-size:12px;color:#222;">Y</span>
<span class="a" style="left:103px;top:204px;font-size:12px;color:#222;">W</span>
<span class="a" style="left:199px;top:204px;font-size:12px;color:#222;">H</span>
<span class="a" style="left:103px;top:234px;font-size:12px;color:#222;">R</span>
<div class="a inp" style="left:132px;top:139px;width:55px;height:23px">5.5</div>
<div class="a inp" style="left:228px;top:139px;width:55px;height:23px">6.7</div>
<div class="a inp" style="left:327px;top:139px;width:55px;height:23px">1.2</div>
<div class="a inp" style="left:131px;top:169px;width:55px;height:23px">50</div>
<div class="a inp" style="left:228px;top:169px;width:55px;height:23px">-17</div>
<div class="a inp" style="left:131px;top:199px;width:55px;height:23px">651</div>
<div class="a inp" style="left:228px;top:199px;width:55px;height:23px">619</div>
<div class="a inp" style="left:131px;top:229px;width:55px;height:23px">0</div>
<div class="a" style="left:12px;top:271px;width:380px;height:1px;background:#e4e4e4"></div>
<span class="a" style="left:16px;top:278px;font-size:13px;font-weight:bold;color:#222">Font</span>
<span class="a" style="left:17px;top:311px;font-size:12px;color:#222;">Font</span>
<div class="a" style="left:69px;top:307px;width:149px;height:23px;background:#f2f2f2;border-radius:3px;box-shadow:0 0 1px #ddd"></div>
<span class="a" style="left:75px;top:310px;font-size:14.5px;letter-spacing:-0.75px;color:#222">YESTO DOWER</span>
<svg class="a" style="left:207px;top:316px" width="8" height="5" viewBox="0 0 8 5"><path d="M0 0h8L4 5z" fill="#777"/></svg>
<div class="a" style="left:229px;top:306px;width:60px;height:28px;border:1px solid #cfcfcf;border-radius:2px;background:#fff"></div>
<span class="a" style="left:240px;top:312px;font-size:13px;color:#222">264</span>
<svg class="a" style="left:273px;top:311px" width="12" height="18" viewBox="0 0 12 18"><path d="M1 7l5-5 5 5z M1 11l5 5 5-5z" fill="#333"/></svg>
<div class="a" style="left:300px;top:307px;width:28px;height:26px;background:#222"></div>
<div class="a" style="left:317px;top:325px;width:10px;height:8px;background:#eee;border:1px solid #999"></div>
<svg class="a" style="left:319px;top:327px" width="6" height="4" viewBox="0 0 6 4"><path d="M0 0h6L3 4z" fill="#333"/></svg>
<div class="a" style="left:69px;top:335px;width:121px;height:30px;border:1px solid #dcdcdc;background:#fff"></div>
<div class="a" style="left:99px;top:335px;width:1px;height:30px;background:#dcdcdc"></div>
<div class="a" style="left:129px;top:335px;width:1px;height:30px;background:#dcdcdc"></div>
<div class="a" style="left:159px;top:335px;width:1px;height:30px;background:#dcdcdc"></div>
<span class="a" style="left:79px;top:342px;font-size:13px;font-weight:bold;font-family:Liberation Serif,serif;color:#5a6570">B</span>
<span class="a" style="left:110px;top:342px;font-size:13px;font-style:italic;font-family:Liberation Serif,serif;color:#5a6570">I</span>
<span class="a" style="left:139px;top:342px;font-size:11px;font-weight:bold;text-decoration:underline;font-family:Liberation Serif,serif;color:#5a6570">U</span>
<svg class="a" style="left:166px;top:342px" width="15" height="15" viewBox="0 0 15 15"><path d="M9 1l5 5-3 1-3-3z" fill="#5a6570"/><path d="M7.5 5.5l2 2L6 13 2 9z" fill="#5a6570"/><path d="M4 10.5l1.5 1.5M3 9.5l1 1" stroke="#fff" stroke-width="0.8"/></svg>
<span class="a" style="left:17px;top:380px;font-size:12px;color:#222;">Alignment</span>
<div class="a" style="left:101px;top:375px;width:118px;height:30px;border:1px solid #dcdcdc;background:#fff"></div>
<div class="a" style="left:130px;top:375px;width:1px;height:30px;background:#dcdcdc"></div>
<div class="a" style="left:159px;top:375px;width:1px;height:30px;background:#dcdcdc"></div>
<div class="a" style="left:188px;top:375px;width:1px;height:30px;background:#dcdcdc"></div>
<svg class="a" style="left:108px;top:385px" width="14" height="12" viewBox="0 0 14 12" fill="#777"><rect x="0" y="0.0" width="14" height="1.2"/><rect x="0" y="2.6" width="11" height="1.2"/><rect x="0" y="5.2" width="14" height="1.2"/><rect x="0" y="7.800000000000001" width="11" height="1.2"/><rect x="0" y="10.4" width="14" height="1.2"/></svg>
<svg class="a" style="left:137px;top:385px" width="14" height="12" viewBox="0 0 14 12" fill="#777"><rect x="0.0" y="0.0" width="14" height="1.2"/><rect x="1.5" y="2.6" width="11" height="1.2"/><rect x="0.0" y="5.2" width="14" height="1.2"/><rect x="1.5" y="7.800000000000001" width="11" height="1.2"/><rect x="0.0" y="10.4" width="14" height="1.2"/></svg>
<svg class="a" style="left:166px;top:385px" width="14" height="12" viewBox="0 0 14 12" fill="#777"><rect x="0" y="0.0" width="14" height="1.2"/><rect x="3" y="2.6" width="11" height="1.2"/><rect x="0" y="5.2" width="14" height="1.2"/><rect x="3" y="7.800000000000001" width="11" height="1.2"/><rect x="0" y="10.4" width="14" height="1.2"/></svg>
<svg class="a" style="left:195px;top:385px" width="14" height="12" viewBox="0 0 14 12" fill="#777"><rect x="0" y="0.0" width="14" height="1.2"/><rect x="0" y="2.6" width="14" height="1.2"/><rect x="0" y="5.2" width="14" height="1.2"/><rect x="0" y="7.800000000000001" width="14" height="1.2"/><rect x="0" y="10.4" width="14" height="1.2"/></svg>
<span class="a" style="left:17px;top:420px;font-size:12px;color:#222;">Word Spacing</span>
<div class="a" style="left:113px;top:425px;width:206px;height:5px;background:#d6d6d6;border-radius:3px;box-shadow:inset 0 1px 1px #bbb"></div>
<div class="a" style="left:113px;top:421px;width:13px;height:13px;background:#eee;border:1px solid #bbb;border-radius:50%"></div>
<span class="a" style="left:341px;top:418px;font-size:13px;color:#222;border-bottom:1px dotted #555;line-height:15px">0%</span>
<span class="a" style="left:17px;top:460px;font-size:12px;color:#222;">Line Spacing</span>
<div class="a" style="left:94px;top:465px;width:206px;height:5px;background:#d6d6d6;border-radius:3px;box-shadow:inset 0 1px 1px #bbb"></div>
<div class="a" style="left:94px;top:461px;width:13px;height:13px;background:#eee;border:1px solid #bbb;border-radius:50%"></div>
<span class="a" style="left:322px;top:457px;font-size:13px;color:#222;border-bottom:1px dotted #555;line-height:15px">0%</span>
<div class="a" style="left:12px;top:501px;width:380px;height:1px;background:#e4e4e4"></div>
<span class="a" style="left:16px;top:508px;font-size:13px;font-weight:bold;color:#222">Shadow</span>
<span class="a" style="left:17px;top:541px;font-size:12px;color:#222;">Shadow</span>
<div class="a" style="left:316px;top:536px;width:15px;height:15px;border:1.5px solid #3a7bd5;border-radius:2px"></div>
<div class="a" style="left:12px;top:581px;width:380px;height:1px;background:#e4e4e4"></div>
<span class="a" style="left:16px;top:588px;font-size:13px;font-weight:bold;color:#222">Text Effect</span>
<span class="a" style="left:13px;top:620px;font-size:12px;color:#222;">WordArt Settings</span>
<div class="a" style="left:11.5px;top:647px;width:39px;height:39px;border:1px solid #e2e2e2;background:#fff"></div>
<div class="a" style="left:11.5px;top:690px;width:39px;height:10px;border:1px solid #e2e2e2;background:#fff"></div>
<div class="a" style="left:54.5px;top:647px;width:39px;height:39px;border:1px solid #e2e2e2;background:#fff"></div>
<div class="a" style="left:54.5px;top:690px;width:39px;height:10px;border:1px solid #e2e2e2;background:#fff"></div>
<div class="a" style="left:97.5px;top:647px;width:39px;height:39px;border:1px solid #e2e2e2;background:#fff"></div>
<div class="a" style="left:97.5px;top:690px;width:39px;height:10px;border:1px solid #e2e2e2;background:#fff"></div>
<div class="a" style="left:140.5px;top:647px;width:39px;height:39px;border:1px solid #e2e2e2;background:#fff"></div>
<div class="a" style="left:140.5px;top:690px;width:39px;height:10px;border:1px solid #e2e2e2;background:#fff"></div>
<div class="a" style="left:183.5px;top:647px;width:39px;height:39px;border:1px solid #e2e2e2;background:#fff"></div>
<div class="a" style="left:183.5px;top:690px;width:39px;height:10px;border:1px solid #e2e2e2;background:#fff"></div>
<div class="a" style="left:226.5px;top:647px;width:39px;height:39px;border:1px solid #e2e2e2;background:#fff"></div>
<div class="a" style="left:226.5px;top:690px;width:39px;height:10px;border:1px solid #e2e2e2;background:#fff"></div>
<div class="a" style="left:269.5px;top:647px;width:39px;height:39px;border:1px solid #e2e2e2;background:#fff"></div>
<div class="a" style="left:269.5px;top:690px;width:39px;height:10px;border:1px solid #e2e2e2;background:#fff"></div>
<div class="a" style="left:312.5px;top:647px;width:39px;height:39px;border:1px solid #e2e2e2;background:#fff"></div>
<div class="a" style="left:312.5px;top:690px;width:39px;height:10px;border:1px solid #e2e2e2;background:#fff"></div>
<svg class="a" style="left:18.5px;top:652px" width="28" height="30" viewBox="0 0 28 30"><path d="M0,28 L9.5,0 H16.5 L26,28 H19.5 L17.7,22.5 H8.3 L6.5,28z M10,17 H16 L13,7.5z" fill="#a3a7ab" fill-rule="evenodd"/><path d="M15,26 l7,-7 l4.5,4.5 l-7,7z" fill="#fff"/><path d="M16.5,25.5 l6,-6 l3,3 l-6,6z" fill="#a3a7ab"/><path d="M13,28.8h7" stroke="#777" stroke-width="0.6"/></svg>
<svg class="a" style="left:55.5px;top:648px" width="37" height="37" viewBox="0 0 37 37"><rect x="0" y="0" width="4" height="4" fill="#d0d0d0"/><rect x="0" y="8" width="4" height="4" fill="#d0d0d0"/><rect x="0" y="16" width="4" height="4" fill="#d0d0d0"/><rect x="0" y="24" width="4" height="4" fill="#d0d0d0"/><rect x="0" y="32" width="4" height="4" fill="#d0d0d0"/><rect x="4" y="4" width="4" height="4" fill="#d0d0d0"/><rect x="4" y="12" width="4" height="4" fill="#d0d0d0"/><rect x="4" y="20" width="4" height="4" fill="#d0d0d0"/><rect x="4" y="28" width="4" height="4" fill="#d0d0d0"/><rect x="8" y="0" width="4" height="4" fill="#d0d0d0"/><rect x="8" y="8" width="4" height="4" fill="#d0d0d0"/><rect x="8" y="16" width="4" height="4" fill="#d0d0d0"/><rect x="8" y="24" width="4" height="4" fill="#d0d0d0"/><rect x="8" y="32" width="4" height="4" fill="#d0d0d0"/><rect x="12" y="4" width="4" height="4" fill="#d0d0d0"/><rect x="12" y="12" width="4" height="4" fill="#d0d0d0"/><rect x="12" y="20" width="4" height="4" fill="#d0d0d0"/><rect x="12" y="28" width="4" height="4" fill="#d0d0d0"/><rect x="16" y="0" width="4" height="4" fill="#d0d0d0"/><rect x="16" y="8" width="4" height="4" fill="#d0d0d0"/><rect x="16" y="16" width="4" height="4" fill="#d0d0d0"/><rect x="16" y="24" width="4" height="4" fill="#d0d0d0"/><rect x="16" y="32" width="4" height="4" fill="#d0d0d0"/><rect x="20" y="4" width="4" height="4" fill="#d0d0d0"/><rect x="20" y="12" width="4" height="4" fill="#d0d0d0"/><rect x="20" y="20" width="4" height="4" fill="#d0d0d0"/><rect x="20" y="28" width="4" height="4" fill="#d0d0d0"/><rect x="24" y="0" width="4" height="4" fill="#d0d0d0"/><rect x="24" y="8" width="4" height="4" fill="#d0d0d0"/><rect x="24" y="16" width="4" height="4" fill="#d0d0d0"/><rect x="24" y="24" width="4" height="4" fill="#d0d0d0"/><rect x="24" y="32" width="4" height="4" fill="#d0d0d0"/><rect x="28" y="4" width="4" height="4" fill="#d0d0d0"/><rect x="28" y="12" width="4" height="4" fill="#d0d0d0"/><rect x="28" y="20" width="4" height="4" fill="#d0d0d0"/><rect x="28" y="28" width="4" height="4" fill="#d0d0d0"/><rect x="32" y="0" width="4" height="4" fill="#d0d0d0"/><rect x="32" y="8" width="4" height="4" fill="#d0d0d0"/><rect x="32" y="16" width="4" height="4" fill="#d0d0d0"/><rect x="32" y="24" width="4" height="4" fill="#d0d0d0"/><rect x="32" y="32" width="4" height="4" fill="#d0d0d0"/><g transform="translate(5.5,4)"><path d="M0,28 L9.5,0 H16.5 L26,28 H19.5 L17.7,22.5 H8.3 L6.5,28z M10,17 H16 L13,7.5z" fill="#fff" stroke="#000" stroke-width="2" stroke-linejoin="round" fill-rule="evenodd"/></g></svg>
<svg class="a" style="left:103.5px;top:652px" width="28" height="32" viewBox="0 0 28 32"><path d="M0,28 L9.5,0 H16.5 L26,28 H19.5 L17.7,22.5 H8.3 L6.5,28z M10,17 H16 L13,7.5z" transform="translate(1,2)" fill="#000" fill-opacity="0.18" fill-rule="evenodd" filter="url(#blur1)"/><path d="M0,28 L9.5,0 H16.5 L26,28 H19.5 L17.7,22.5 H8.3 L6.5,28z M10,17 H16 L13,7.5z" fill="#1fb597" fill-rule="evenodd"/></svg>
<svg class="a" style="left:146.5px;top:652px" width="28" height="32" viewBox="0 0 28 32"><path d="M0,28 L9.5,0 H16.5 L26,28 H19.5 L17.7,22.5 H8.3 L6.5,28z M10,17 H16 L13,7.5z" transform="translate(1,2)" fill="#000" fill-opacity="0.18" fill-rule="evenodd" filter="url(#blur1)"/><path d="M0,28 L9.5,0 H16.5 L26,28 H19.5 L17.7,22.5 H8.3 L6.5,28z M10,17 H16 L13,7.5z" fill="#3558a8" fill-rule="evenodd"/></svg>
<svg class="a" style="left:189.5px;top:652px" width="28" height="32" viewBox="0 0 28 32"><path d="M0,28 L9.5,0 H16.5 L26,28 H19.5 L17.7,22.5 H8.3 L6.5,28z M10,17 H16 L13,7.5z" transform="translate(1,2)" fill="#000" fill-opacity="0.18" fill-rule="evenodd" filter="url(#blur1)"/><path d="M0,28 L9.5,0 H16.5 L26,28 H19.5 L17.7,22.5 H8.3 L6.5,28z M10,17 H16 L13,7.5z" fill="#a9a3cf" fill-rule="evenodd"/></svg>
<svg class="a" style="left:232.5px;top:652px" width="28" height="32" viewBox="0 0 28 32"><path d="M0,28 L9.5,0 H16.5 L26,28 H19.5 L17.7,22.5 H8.3 L6.5,28z M10,17 H16 L13,7.5z" transform="translate(1,2)" fill="#000" fill-opacity="0.18" fill-rule="evenodd" filter="url(#blur1)"/><path d="M0,28 L9.5,0 H16.5 L26,28 H19.5 L17.7,22.5 H8.3 L6.5,28z M10,17 H16 L13,7.5z" fill="#c45380" fill-rule="evenodd"/></svg>
<svg class="a" style="left:275.5px;top:652px" width="28" height="32" viewBox="0 0 28 32"><path d="M0,28 L9.5,0 H16.5 L26,28 H19.5 L17.7,22.5 H8.3 L6.5,28z M10,17 H16 L13,7.5z" transform="translate(1,2)" fill="#000" fill-opacity="0.18" fill-rule="evenodd" filter="url(#blur1)"/><path d="M0,28 L9.5,0 H16.5 L26,28 H19.5 L17.7,22.5 H8.3 L6.5,28z M10,17 H16 L13,7.5z" fill="#e24a4f" fill-rule="evenodd"/></svg>
<svg class="a" style="left:318.5px;top:652px" width="28" height="32" viewBox="0 0 28 32"><path d="M0,28 L9.5,0 H16.5 L26,28 H19.5 L17.7,22.5 H8.3 L6.5,28z M10,17 H16 L13,7.5z" transform="translate(1,2)" fill="#000" fill-opacity="0.18" fill-rule="evenodd" filter="url(#blur1)"/><path d="M0,28 L9.5,0 H16.5 L26,28 H19.5 L17.7,22.5 H8.3 L6.5,28z M10,17 H16 L13,7.5z" fill="#f0961a" fill-rule="evenodd"/></svg>
<svg width="0" height="0" style="position:absolute"><defs><filter id="blur1"><feGaussianBlur stdDeviation="1"/></filter></defs></svg>
<div class="a" style="left:380px;top:649px;width:7px;height:60px;background:#c9c9c9;border-radius:3px"></div></div>
<div id="bt" class="a"><svg class="a" style="left:0;top:0" width="1556" height="50" viewBox="0 773 1556 50">
<rect x="3" y="792" width="10" height="9" rx="1" fill="none" stroke="#1a73c7" stroke-width="2"/><path d="M13,795l4,-2.5v8l-4,-2.5z" fill="#1a73c7"/>
<rect x="42" y="790" width="12.5" height="12.5" fill="none" stroke="#666" stroke-width="2"/><path d="M43,801.5 L53.5,791 V801.5z" fill="#666"/>
<path d="M87,790 H80 V802.5 H92.5 V796" fill="none" stroke="#1a73c7" stroke-width="2"/><path d="M90,788.5 l1,2.3 l2.3,1 l-2.3,1 l-1,2.3 l-1,-2.3 l-2.3,-1 l2.3,-1z" fill="#1a73c7"/>
<rect x="117" y="789.5" width="13.5" height="13.5" fill="#1a73c7"/><path d="M118,797 l6,-6.5 M118,802 l11,-11.5 M123,802.5 l6.5,-6.5" stroke="#fff" stroke-width="1.6"/>
<rect x="158" y="790" width="12.5" height="13" rx="1" fill="none" stroke="#666" stroke-width="2"/><path d="M160.5,793 h7.5 v2 h-1 v-0.8 h-1.8 v5.6 h1 v1 h-3.9 v-1 h1 v-5.6 h-1.8 v0.8 h-1z" fill="#666"/>
<rect x="200" y="790" width="12.5" height="13" rx="1" fill="none" stroke="#1a73c7" stroke-width="2"/><circle cx="205" cy="798.8" r="2.1" fill="none" stroke="#1a73c7" stroke-width="1.6"/><path d="M207.1,798.8 V792.5 h2" fill="none" stroke="#1a73c7" stroke-width="1.6"/>
<circle cx="246" cy="793" r="3.3" fill="none" stroke="#666" stroke-width="1.8"/><rect x="240" y="798.5" width="12.5" height="4.5" rx="2.2" fill="none" stroke="#666" stroke-width="1.8"/>
<rect x="281.5" y="789" width="5" height="9" rx="2.5" fill="#666"/><path d="M279,795 a5,5 0 0 0 10,0 M284,800 v4" fill="none" stroke="#666" stroke-width="1.6"/>
<path d="M316,791 C313,796 311,798 311,800.5 a5,5 0 0 0 10,0 C321,798 319,796 316,791z" fill="#666"/>
<path d="M683.2,799 A5.6,5.6 0 1 0 685.2,794.6" fill="none" stroke="#555" stroke-width="1.7"/><path d="M682.3,792.3 l5,0.8 l-3.2,3.6z" fill="#555"/><path d="M687,796.3 v5.2 l4.2,-2.6z" fill="#555"/>
<rect x="710" y="793.5" width="2" height="11" fill="#555"/><path d="M712.5,799 l6,-5.5 v3 h7.5 v5 h-7.5 v3z" fill="#555"/>
<path d="M742,799 l8,-6 v12z" fill="#555"/><rect x="752.5" y="793" width="2" height="12" fill="#555"/>
<path d="M770.5,791.5 L785.5,799.5 L770.5,808z" fill="#555" stroke="#555" stroke-width="1" stroke-linejoin="round"/>
<rect x="802" y="793" width="2" height="12" fill="#555"/><path d="M808,793 l8,6 l-8,6z" fill="#555"/>
<path d="M832,796.5 h7.5 v-3 l6,5.5 l-6,5.5 v-3 h-7.5z" fill="#555"/><rect x="846" y="793.5" width="2" height="11" fill="#555"/>
<path d="M870.5,793 h5.5 v5.5z M869.5,804.5 h-5.5 v-5.5z" fill="#555"/><path d="M874,795 l-3,3 M866,803 l3,-3" stroke="#555" stroke-width="1.8"/>
<text x="1115" y="804" font-family="Liberation Serif" font-weight="bold" font-size="15.5" fill="#2b7fd4">00:00:06.70</text>
<text x="1197" y="804" font-family="Liberation Serif" font-weight="bold" font-size="15" fill="#2b7fd4">/</text>
<text x="1209" y="804" font-family="Liberation Serif" font-weight="bold" font-size="15.5" fill="#a0a0a0">00:01:06.60</text>
<line x1="1209" y1="807" x2="1287" y2="807" stroke="#a0a0a0" stroke-width="1"/>
<path d="M1295,798.5h8.5" stroke="#aaa" stroke-width="1.8"/><path d="M1315.5,798.5h9M1320,794v9" stroke="#aaa" stroke-width="1.8"/>
<path d="M1345,791 h-6 v12 h6" fill="none" stroke="#555" stroke-width="2"/><path d="M1339,791 h10 v5" fill="none" stroke="#555" stroke-width="2"/><path d="M1347,798 l6,6 M1353,798 l-6,6" stroke="#555" stroke-width="1.8"/>
<rect x="1363" y="791.5" width="16.5" height="13" rx="1" fill="none" stroke="#555" stroke-width="2"/><path d="M1366,798 h10.5" stroke="#555" stroke-width="1.5"/><path d="M1366,798 l3,-2.5 v5z M1376.5,798 l-3,-2.5 v5z" fill="#555"/>
<circle cx="1425.5" cy="797.5" r="5.5" fill="none" stroke="#888" stroke-width="1.2"/><path d="M1429.5,801.5 l3.5,3.5 M1423,797.5h5" stroke="#888" stroke-width="1.2"/>
<rect x="1440" y="796.5" width="82" height="3" rx="1.5" fill="#ddd"/><circle cx="1441" cy="798" r="5" fill="#fff" stroke="#666" stroke-width="1.8"/>
<circle cx="1535.5" cy="797.5" r="5.5" fill="none" stroke="#888" stroke-width="1.2"/><path d="M1539.5,801.5 l3.5,3.5 M1533,797.5h5 M1535.5,795v5" stroke="#888" stroke-width="1.2"/>
</svg></div>
<div id="tl" class="a"><svg class="a" style="left:-1px;top:-1px" width="1556" height="195" viewBox="0 823 1556 195">
<rect x="0" y="823" width="1556" height="195" fill="#fff"/>
<line x1="0" y1="823.5" x2="1556" y2="823.5" stroke="#dcdcdc"/>
<path d="M58,840 v-2.5 a4.5,4.5 0 0 1 9,0 v2.5" fill="none" stroke="#555" stroke-width="1.8"/><rect x="56" y="840" width="13" height="7.5" rx="1.5" fill="none" stroke="#555" stroke-width="1.8"/><rect x="61.5" y="842.5" width="2" height="2.5" fill="#555"/>
<path d="M121.5,838.5 h2.5 l4,-3 v11 l-4,-3 h-2.5z" fill="none" stroke="#777" stroke-width="1"/><path d="M130,839.5 l3,3 M133,839.5 l-3,3" stroke="#777" stroke-width="0.9"/>
<rect x="169" y="860.5" width="1258.5" height="148" fill="#f5f5f5"/>
<rect x="169" y="980.5" width="1258.5" height="28" fill="#f3f3ea"/>
<line x1="168.5" y1="823" x2="168.5" y2="1018" stroke="#dedede"/>
<line x1="1427.5" y1="823" x2="1427.5" y2="1018" stroke="#dedede"/>
<rect x="169" y="846.5" width="1258" height="12" fill="#e3e3e3"/>
<line x1="0" y1="858.8" x2="1556" y2="858.8" stroke="#e4e4e4"/><line x1="0" y1="860.5" x2="1556" y2="860.5" stroke="#dcdcdc"/>
<line x1="0" y1="890.3" x2="1556" y2="890.3" stroke="#dcdcdc"/>
<line x1="0" y1="920.3" x2="1556" y2="920.3" stroke="#dcdcdc"/>
<line x1="0" y1="950.3" x2="1556" y2="950.3" stroke="#dcdcdc"/>
<line x1="0" y1="980.3" x2="1556" y2="980.3" stroke="#dcdcdc"/>
<line x1="0" y1="1008.5" x2="1556" y2="1008.5" stroke="#dcdcdc"/>
<line x1="168.5" y1="836.5" x2="168.5" y2="846.5" stroke="#d0d0d0"/>
<text x="174.0" y="834.8" text-anchor="start" font-family="Liberation Serif" font-size="13.5" fill="#a8a8a8">0s</text>
<line x1="187.4" y1="841" x2="187.4" y2="846.5" stroke="#d0d0d0"/>
<line x1="206.3" y1="836.5" x2="206.3" y2="846.5" stroke="#d0d0d0"/>
<text x="206.3" y="834.8" text-anchor="middle" font-family="Liberation Serif" font-size="13.5" fill="#a8a8a8">2s</text>
<line x1="225.2" y1="841" x2="225.2" y2="846.5" stroke="#d0d0d0"/>
<line x1="244.1" y1="836.5" x2="244.1" y2="846.5" stroke="#d0d0d0"/>
<text x="244.1" y="834.8" text-anchor="middle" font-family="Liberation Serif" font-size="13.5" fill="#a8a8a8">4s</text>
<line x1="262.9" y1="841" x2="262.9" y2="846.5" stroke="#d0d0d0"/>
<line x1="281.8" y1="836.5" x2="281.8" y2="846.5" stroke="#d0d0d0"/>
<text x="281.8" y="834.8" text-anchor="middle" font-family="Liberation Serif" font-size="13.5" fill="#a8a8a8">6s</text>
<line x1="300.7" y1="841" x2="300.7" y2="846.5" stroke="#d0d0d0"/>
<line x1="319.6" y1="836.5" x2="319.6" y2="846.5" stroke="#d0d0d0"/>
<text x="319.6" y="834.8" text-anchor="middle" font-family="Liberation Serif" font-size="13.5" fill="#a8a8a8">8s</text>
<line x1="338.5" y1="841" x2="338.5" y2="846.5" stroke="#d0d0d0"/>
<line x1="357.4" y1="836.5" x2="357.4" y2="846.5" stroke="#d0d0d0"/>
<text x="357.4" y="834.8" text-anchor="middle" font-family="Liberation Serif" font-size="13.5" fill="#a8a8a8">10s</text>
<line x1="376.3" y1="841" x2="376.3" y2="846.5" stroke="#d0d0d0"/>
<line x1="395.2" y1="836.5" x2="395.2" y2="846.5" stroke="#d0d0d0"/>
<text x="395.2" y="834.8" text-anchor="middle" font-family="Liberation Serif" font-size="13.5" fill="#a8a8a8">12s</text>
<line x1="414.1" y1="841" x2="414.1" y2="846.5" stroke="#d0d0d0"/>
<line x1="433.0" y1="836.5" x2="433.0" y2="846.5" stroke="#d0d0d0"/>
<text x="433.0" y="834.8" text-anchor="middle" font-family="Liberation Serif" font-size="13.5" fill="#a8a8a8">14s</text>
<line x1="451.9" y1="841" x2="451.9" y2="846.5" stroke="#d0d0d0"/>
<line x1="470.7" y1="836.5" x2="470.7" y2="846.5" stroke="#d0d0d0"/>
<text x="470.7" y="834.8" text-anchor="middle" font-family="Liberation Serif" font-size="13.5" fill="#a8a8a8">16s</text>
<line x1="489.6" y1="841" x2="489.6" y2="846.5" stroke="#d0d0d0"/>
<line x1="508.5" y1="836.5" x2="508.5" y2="846.5" stroke="#d0d0d0"/>
<text x="508.5" y="834.8" text-anchor="middle" font-family="Liberation Serif" font-size="13.5" fill="#a8a8a8">18s</text>
<line x1="527.4" y1="841" x2="527.4" y2="846.5" stroke="#d0d0d0"/>
<line x1="546.3" y1="836.5" x2="546.3" y2="846.5" stroke="#d0d0d0"/>
<text x="546.3" y="834.8" text-anchor="middle" font-family="Liberation Serif" font-size="13.5" fill="#a8a8a8">20s</text>
<line x1="565.2" y1="841" x2="565.2" y2="846.5" stroke="#d0d0d0"/>
<line x1="584.1" y1="836.5" x2="584.1" y2="846.5" stroke="#d0d0d0"/>
<text x="584.1" y="834.8" text-anchor="middle" font-family="Liberation Serif" font-size="13.5" fill="#a8a8a8">22s</text>
<line x1="603.0" y1="841" x2="603.0" y2="846.5" stroke="#d0d0d0"/>
<line x1="621.9" y1="836.5" x2="621.9" y2="846.5" stroke="#d0d0d0"/>
<text x="621.9" y="834.8" text-anchor="middle" font-family="Liberation Serif" font-size="13.5" fill="#a8a8a8">24s</text>
<line x1="640.8" y1="841" x2="640.8" y2="846.5" stroke="#d0d0d0"/>
<line x1="659.6" y1="836.5" x2="659.6" y2="846.5" stroke="#d0d0d0"/>
<text x="659.6" y="834.8" text-anchor="middle" font-family="Liberation Serif" font-size="13.5" fill="#a8a8a8">26s</text>
<line x1="678.5" y1="841" x2="678.5" y2="846.5" stroke="#d0d0d0"/>
<line x1="697.4" y1="836.5" x2="697.4" y2="846.5" stroke="#d0d0d0"/>
<text x="697.4" y="834.8" text-anchor="middle" font-family="Liberation Serif" font-size="13.5" fill="#a8a8a8">28s</text>
<line x1="716.3" y1="841" x2="716.3" y2="846.5" stroke="#d0d0d0"/>
<line x1="735.2" y1="836.5" x2="735.2" y2="846.5" stroke="#d0d0d0"/>
<text x="735.2" y="834.8" text-anchor="middle" font-family="Liberation Serif" font-size="13.5" fill="#a8a8a8">30s</text>
<line x1="754.1" y1="841" x2="754.1" y2="846.5" stroke="#d0d0d0"/>
<line x1="773.0" y1="836.5" x2="773.0" y2="846.5" stroke="#d0d0d0"/>
<text x="773.0" y="834.8" text-anchor="middle" font-family="Liberation Serif" font-size="13.5" fill="#a8a8a8">32s</text>
<line x1="791.9" y1="841" x2="791.9" y2="846.5" stroke="#d0d0d0"/>
<line x1="810.8" y1="836.5" x2="810.8" y2="846.5" stroke="#d0d0d0"/>
<text x="810.8" y="834.8" text-anchor="middle" font-family="Liberation Serif" font-size="13.5" fill="#a8a8a8">34s</text>
<line x1="829.6" y1="841" x2="829.6" y2="846.5" stroke="#d0d0d0"/>
<line x1="848.5" y1="836.5" x2="848.5" y2="846.5" stroke="#d0d0d0"/>
<text x="848.5" y="834.8" text-anchor="middle" font-family="Liberation Serif" font-size="13.5" fill="#a8a8a8">36s</text>
<line x1="867.4" y1="841" x2="867.4" y2="846.5" stroke="#d0d0d0"/>
<line x1="886.3" y1="836.5" x2="886.3" y2="846.5" stroke="#d0d0d0"/>
<text x="886.3" y="834.8" text-anchor="middle" font-family="Liberation Serif" font-size="13.5" fill="#a8a8a8">38s</text>
<line x1="905.2" y1="841" x2="905.2" y2="846.5" stroke="#d0d0d0"/>
<line x1="924.1" y1="836.5" x2="924.1" y2="846.5" stroke="#d0d0d0"/>
<text x="924.1" y="834.8" text-anchor="middle" font-family="Liberation Serif" font-size="13.5" fill="#a8a8a8">40s</text>
<line x1="943.0" y1="841" x2="943.0" y2="846.5" stroke="#d0d0d0"/>
<line x1="961.9" y1="836.5" x2="961.9" y2="846.5" stroke="#d0d0d0"/>
<text x="961.9" y="834.8" text-anchor="middle" font-family="Liberation Serif" font-size="13.5" fill="#a8a8a8">42s</text>
<line x1="980.8" y1="841" x2="980.8" y2="846.5" stroke="#d0d0d0"/>
<line x1="999.7" y1="836.5" x2="999.7" y2="846.5" stroke="#d0d0d0"/>
<text x="999.7" y="834.8" text-anchor="middle" font-family="Liberation Serif" font-size="13.5" fill="#a8a8a8">44s</text>
<line x1="1018.6" y1="841" x2="1018.6" y2="846.5" stroke="#d0d0d0"/>
<line x1="1037.4" y1="836.5" x2="1037.4" y2="846.5" stroke="#d0d0d0"/>
<text x="1037.4" y="834.8" text-anchor="middle" font-family="Liberation Serif" font-size="13.5" fill="#a8a8a8">46s</text>
<line x1="1056.3" y1="841" x2="1056.3" y2="846.5" stroke="#d0d0d0"/>
<line x1="1075.2" y1="836.5" x2="1075.2" y2="846.5" stroke="#d0d0d0"/>
<text x="1075.2" y="834.8" text-anchor="middle" font-family="Liberation Serif" font-size="13.5" fill="#a8a8a8">48s</text>
<line x1="1094.1" y1="841" x2="1094.1" y2="846.5" stroke="#d0d0d0"/>
<line x1="1113.0" y1="836.5" x2="1113.0" y2="846.5" stroke="#d0d0d0"/>
<text x="1113.0" y="834.8" text-anchor="middle" font-family="Liberation Serif" font-size="13.5" fill="#a8a8a8">50s</text>
<line x1="1131.9" y1="841" x2="1131.9" y2="846.5" stroke="#d0d0d0"/>
<line x1="1150.8" y1="836.5" x2="1150.8" y2="846.5" stroke="#d0d0d0"/>
<text x="1150.8" y="834.8" text-anchor="middle" font-family="Liberation Serif" font-size="13.5" fill="#a8a8a8">52s</text>
<line x1="1169.7" y1="841" x2="1169.7" y2="846.5" stroke="#d0d0d0"/>
<line x1="1188.6" y1="836.5" x2="1188.6" y2="846.5" stroke="#d0d0d0"/>
<text x="1188.6" y="834.8" text-anchor="middle" font-family="Liberation Serif" font-size="13.5" fill="#a8a8a8">54s</text>
<line x1="1207.5" y1="841" x2="1207.5" y2="846.5" stroke="#d0d0d0"/>
<line x1="1226.3" y1="836.5" x2="1226.3" y2="846.5" stroke="#d0d0d0"/>
<text x="1226.3" y="834.8" text-anchor="middle" font-family="Liberation Serif" font-size="13.5" fill="#a8a8a8">56s</text>
<line x1="1245.2" y1="841" x2="1245.2" y2="846.5" stroke="#d0d0d0"/>
<line x1="1264.1" y1="836.5" x2="1264.1" y2="846.5" stroke="#d0d0d0"/>
<text x="1264.1" y="834.8" text-anchor="middle" font-family="Liberation Serif" font-size="13.5" fill="#a8a8a8">58s</text>
<line x1="1283.0" y1="841" x2="1283.0" y2="846.5" stroke="#d0d0d0"/>
<line x1="1301.9" y1="836.5" x2="1301.9" y2="846.5" stroke="#d0d0d0"/>
<text x="1301.9" y="834.8" text-anchor="middle" font-family="Liberation Serif" font-size="13.5" fill="#a8a8a8">60s</text>
<line x1="1320.8" y1="841" x2="1320.8" y2="846.5" stroke="#d0d0d0"/>
<line x1="1339.7" y1="836.5" x2="1339.7" y2="846.5" stroke="#d0d0d0"/>
<text x="1339.7" y="834.8" text-anchor="middle" font-family="Liberation Serif" font-size="13.5" fill="#a8a8a8">62s</text>
<line x1="1358.6" y1="841" x2="1358.6" y2="846.5" stroke="#d0d0d0"/>
<line x1="1377.5" y1="836.5" x2="1377.5" y2="846.5" stroke="#d0d0d0"/>
<text x="1377.5" y="834.8" text-anchor="middle" font-family="Liberation Serif" font-size="13.5" fill="#a8a8a8">64s</text>
<line x1="1396.4" y1="841" x2="1396.4" y2="846.5" stroke="#d0d0d0"/>
<line x1="1415.2" y1="836.5" x2="1415.2" y2="846.5" stroke="#d0d0d0"/>
<text x="1415.2" y="834.8" text-anchor="middle" font-family="Liberation Serif" font-size="13.5" fill="#a8a8a8">66s</text>
<rect x="169" y="846.5" width="7" height="11.5" rx="1" fill="#2b8ae6"/><path d="M171.3,849v6.5M173.7,849v6.5" stroke="#fff" stroke-width="0.9"/>
<rect x="1420" y="846.5" width="7" height="11.5" rx="1" fill="#2b8ae6"/><path d="M1422.3,849v6.5M1424.7,849v6.5" stroke="#fff" stroke-width="0.9"/>
<path d="M33,869 h-6 v14 h16.5 v-7.5" fill="none" stroke="#555" stroke-width="1.6"/><path d="M36,877.5 l0.9,-2.1 l2.1,-0.9 l-2.1,-0.9 l-0.9,-2.1 l-0.9,2.1 l-2.1,0.9 l2.1,0.9z M41.5,870 l0.6,-1.4 l1.4,-0.6 l-1.4,-0.6 l-0.6,-1.4 l-0.6,1.4 l-1.4,0.6 l1.4,0.6z" fill="#555"/>
<text x="53.5" y="880" font-family="Liberation Sans" font-size="13" fill="#444">Stage Effects</text>
<rect x="27" y="897.5" width="16.5" height="15.5" rx="1" fill="none" stroke="#555" stroke-width="1.6"/><path d="M28,905 l7.5,-7.5 M28,911.5 l14,-14 M34,912.5 l8.5,-8.5 M39,912.5 l3.5,-3.5" stroke="#555" stroke-width="1.5"/>
<text x="53.5" y="910" font-family="Liberation Sans" font-size="13" fill="#444">Background</text>
<path d="M8.5,932.5 h7.5 l-3.75,4.5z" fill="#555"/>
<rect x="27" y="927.5" width="16.5" height="15.5" rx="1" fill="none" stroke="#555" stroke-width="1.6"/><circle cx="33.5" cy="938" r="2" fill="none" stroke="#555" stroke-width="1.5"/><path d="M35.5,938 v-7 h2.5" fill="none" stroke="#555" stroke-width="1.5"/>
<text x="53.5" y="940.5" font-family="Liberation Sans" font-size="13" fill="#444">Sound</text>
<text x="53.5" y="970.5" font-family="Liberation Sans" font-size="13" fill="#444">Sound</text>
<text x="53.5" y="1000.5" font-family="Liberation Sans" font-size="13" fill="#444">Sound</text>
<path d="M133,933.5 h1.5 l3.5,-3.5 v10 l-3.5,-3.5 h-1.5z" fill="#777"/><path d="M140.5,932 l2.5,2.5 l-2.5,2.5" fill="none" stroke="#777" stroke-width="1.3"/>
<path d="M133,963.5 h1.5 l3.5,-3.5 v10 l-3.5,-3.5 h-1.5z" fill="#777"/><path d="M140.5,962 l2.5,2.5 l-2.5,2.5" fill="none" stroke="#777" stroke-width="1.3"/>
<path d="M154,961 h9.5 M156.5,960 h4.5" stroke="#777" stroke-width="1.2"/><path d="M155,962 h7.5 l-0.7,8.5 h-6.1z" fill="#777"/>
<path d="M133,993.5 h1.5 l3.5,-3.5 v10 l-3.5,-3.5 h-1.5z" fill="#777"/><path d="M140.5,992 l2.5,2.5 l-2.5,2.5" fill="none" stroke="#777" stroke-width="1.3"/>
<path d="M154,991 h9.5 M156.5,990 h4.5" stroke="#777" stroke-width="1.2"/><path d="M155,992 h7.5 l-0.7,8.5 h-6.1z" fill="#777"/>
<rect x="279.5" y="864.5" width="13" height="21" fill="#fff" stroke="#ddd"/><path d="M291,869 h-7 v12 h7" fill="none" stroke="#777" stroke-width="2"/>
<path d="M318.9,863.5 L330.4,875 L318.9,886.5 L307.4,875z" fill="#e2e2e2"/><path d="M313.9,875 h10 M318.9,870 v10" stroke="#444" stroke-width="2"/>
<rect x="174.5" y="894.5" width="4.5" height="21" fill="#fff" stroke="#ddd"/>
<path d="M205.8,893.5 L217.3,905 L205.8,916.5 L194.3,905z" fill="#e2e2e2"/><path d="M200.8,905 h10 M205.8,900 v10" stroke="#444" stroke-width="2"/>
<path d="M191.7,923.5 L203.2,935 L191.7,946.5 L180.2,935z" fill="#e2e2e2"/><path d="M186.7,935 h10 M191.7,930 v10" stroke="#444" stroke-width="2"/>
<path d="M1352.5,953.0 L1364.0,964.5 L1352.5,976.0 L1341.0,964.5z" fill="#e2e2e2"/><path d="M1347.5,964.5 h10 M1352.5,959.5 v10" stroke="#444" stroke-width="2"/>
<rect x="390.4" y="954.5" width="17.4" height="21" fill="#f7f7f7" stroke="#cfcfcf" stroke-width="1"/>
<path d="M392.4,963.3V966.7M393.4,960.3V969.7M394.4,961.5V968.5M395.4,963.9V966.1M396.4,964.0V966.0M397.4,964.8V965.2M398.4,962.5V967.5M399.4,964.5V965.5M400.4,960.5V969.5M401.4,961.1V968.9M402.4,956.3V973.7M403.4,957.8V972.2M404.4,964.5V965.5M405.4,963.2V966.8" stroke="#80858e" stroke-width="1.15"/>
<rect x="441.2" y="954.5" width="80.5" height="21" fill="#f7f7f7" stroke="#cfcfcf" stroke-width="1"/>
<path d="M443.2,963.7V966.3M444.2,960.4V969.6M445.2,961.4V968.6M446.2,964.5V965.5M447.2,959.9V970.1M448.2,963.4V966.6M449.2,962.3V967.7M450.2,958.6V971.4M451.2,963.7V966.3M452.2,961.6V968.4M453.2,959.4V970.6M454.2,956.3V973.7M455.2,962.6V967.4M456.2,963.9V966.1M457.2,963.5V966.5M458.2,959.0V971.0M459.2,957.6V972.4M460.2,959.8V970.2M461.2,961.0V969.0M462.2,958.1V971.9M463.2,962.1V967.9M464.2,963.4V966.6M465.2,960.3V969.7M466.2,958.3V971.7M467.2,962.8V967.2M468.2,964.0V966.0M469.2,964.4V965.6M470.2,963.3V966.7M471.2,964.4V965.6M472.2,962.8V967.2M473.2,964.0V966.0M474.2,961.3V968.7M475.2,958.3V971.7M476.2,963.7V966.3M477.2,963.0V967.0M478.2,956.6V973.4M479.2,964.3V965.7M480.2,963.9V966.1M481.2,960.9V969.1M482.2,964.1V965.9M483.2,963.0V967.0M484.2,956.6V973.4M485.2,961.7V968.3M486.2,960.0V970.0M487.2,957.3V972.7M488.2,957.6V972.4M489.2,962.8V967.2M490.2,963.6V966.4M491.2,964.8V965.2M492.2,964.1V965.9M493.2,963.2V966.8M494.2,964.7V965.3M495.2,964.2V965.8M496.2,963.0V967.0M497.2,960.7V969.3M498.2,963.9V966.1M499.2,963.0V967.0M500.2,958.0V972.0M501.2,962.1V967.9M502.2,964.8V965.2M503.2,963.2V966.8M504.2,958.2V971.8M505.2,962.9V967.1M506.2,961.5V968.5M507.2,961.4V968.6M508.2,961.5V968.5M509.2,957.8V972.2M510.2,963.8V966.2M511.2,963.3V966.7M512.2,961.5V968.5M513.2,963.3V966.7M514.2,958.4V971.6M515.2,957.9V972.1M516.2,958.3V971.7M517.2,963.8V966.2M518.2,963.1V966.9M519.2,964.4V965.6" stroke="#80858e" stroke-width="1.15"/>
<rect x="541" y="954.5" width="73.6" height="21" fill="#f7f7f7" stroke="#cfcfcf" stroke-width="1"/>
<path d="M543.0,963.4V966.6M544.0,956.6V973.4M545.0,956.8V973.2M546.0,956.6V973.4M547.0,964.1V965.9M548.0,964.2V965.8M549.0,960.6V969.4M550.0,958.1V971.9M551.0,960.3V969.7M552.0,963.5V966.5M553.0,957.2V972.8M554.0,959.2V970.8M555.0,963.2V966.8M556.0,963.2V966.8M557.0,956.4V973.6M558.0,962.7V967.3M559.0,959.4V970.6M560.0,964.6V965.4M561.0,957.3V972.7M562.0,963.1V966.9M563.0,956.3V973.7M564.0,963.1V966.9M565.0,964.6V965.4M566.0,956.4V973.6M567.0,961.6V968.4M568.0,962.4V967.6M569.0,958.2V971.8M570.0,963.9V966.1M571.0,963.7V966.3M572.0,963.8V966.2M573.0,963.0V967.0M574.0,963.1V966.9M575.0,961.0V969.0M576.0,962.5V967.5M577.0,961.8V968.2M578.0,961.6V968.4M579.0,962.4V967.6M580.0,963.2V966.8M581.0,963.9V966.1M582.0,959.4V970.6M583.0,963.3V966.7M584.0,961.3V968.7M585.0,963.7V966.3M586.0,963.9V966.1M587.0,958.9V971.1M588.0,961.2V968.8M589.0,957.2V972.8M590.0,960.7V969.3M591.0,961.7V968.3M592.0,962.3V967.7M593.0,962.0V968.0M594.0,959.7V970.3M595.0,956.8V973.2M596.0,961.2V968.8M597.0,958.1V971.9M598.0,964.0V966.0M599.0,964.5V965.5M600.0,963.5V966.5M601.0,958.8V971.2M602.0,963.4V966.6M603.0,960.2V969.8M604.0,957.5V972.5M605.0,962.9V967.1M606.0,962.7V967.3M607.0,956.1V973.9M608.0,964.0V966.0M609.0,961.7V968.3M610.0,964.2V965.8M611.0,959.5V970.5M612.0,961.3V968.7" stroke="#80858e" stroke-width="1.15"/>
<rect x="648" y="954.5" width="63.5" height="21" fill="#f7f7f7" stroke="#cfcfcf" stroke-width="1"/>
<path d="M650.0,964.3V965.7M651.0,960.6V969.4M652.0,962.8V967.2M653.0,958.7V971.3M654.0,964.4V965.6M655.0,963.2V966.8M656.0,963.7V966.3M657.0,962.5V967.5M658.0,958.3V971.7M659.0,962.9V967.1M660.0,961.1V968.9M661.0,964.8V965.2M662.0,959.9V970.1M663.0,962.9V967.1M664.0,960.5V969.5M665.0,963.1V966.9M666.0,963.1V966.9M667.0,962.2V967.8M668.0,961.3V968.7M669.0,963.8V966.2M670.0,961.6V968.4M671.0,964.6V965.4M672.0,964.5V965.5M673.0,963.4V966.6M674.0,959.0V971.0M675.0,961.8V968.2M676.0,963.2V966.8M677.0,963.9V966.1M678.0,959.4V970.6M679.0,963.9V966.1M680.0,956.9V973.1M681.0,958.3V971.7M682.0,961.9V968.1M683.0,962.8V967.2M684.0,959.9V970.1M685.0,963.1V966.9M686.0,959.7V970.3M687.0,962.7V967.3M688.0,964.7V965.3M689.0,963.3V966.7M690.0,963.8V966.2M691.0,963.1V966.9M692.0,957.7V972.3M693.0,963.7V966.3M694.0,963.6V966.4M695.0,964.0V966.0M696.0,962.8V967.2M697.0,956.4V973.6M698.0,962.8V967.2M699.0,963.4V966.6M700.0,964.1V965.9M701.0,962.1V967.9M702.0,963.9V966.1M703.0,964.4V965.6M704.0,964.1V965.9M705.0,964.9V965.1M706.0,963.5V966.5M707.0,961.0V969.0M708.0,959.1V970.9M709.0,959.5V970.5" stroke="#80858e" stroke-width="1.15"/>
<rect x="760" y="954.5" width="57.5" height="21" fill="#f7f7f7" stroke="#cfcfcf" stroke-width="1"/>
<path d="M762.0,962.8V967.2M763.0,956.2V973.8M764.0,959.5V970.5M765.0,963.1V966.9M766.0,957.4V972.6M767.0,959.3V970.7M768.0,963.8V966.2M769.0,961.8V968.2M770.0,958.5V971.5M771.0,961.0V969.0M772.0,959.9V970.1M773.0,964.0V966.0M774.0,964.2V965.8M775.0,963.1V966.9M776.0,961.2V968.8M777.0,960.5V969.5M778.0,961.9V968.1M779.0,958.6V971.4M780.0,961.8V968.2M781.0,960.2V969.8M782.0,959.3V970.7M783.0,964.4V965.6M784.0,959.4V970.6M785.0,959.3V970.7M786.0,961.9V968.1M787.0,962.0V968.0M788.0,959.0V971.0M789.0,960.4V969.6M790.0,964.4V965.6M791.0,959.2V970.8M792.0,961.1V968.9M793.0,964.4V965.6M794.0,960.0V970.0M795.0,960.0V970.0M796.0,961.7V968.3M797.0,962.1V967.9M798.0,957.4V972.6M799.0,956.3V973.7M800.0,964.0V966.0M801.0,958.3V971.7M802.0,962.3V967.7M803.0,962.9V967.1M804.0,963.7V966.3M805.0,963.8V966.2M806.0,956.6V973.4M807.0,958.3V971.7M808.0,957.5V972.5M809.0,963.0V967.0M810.0,961.9V968.1M811.0,963.9V966.1M812.0,962.3V967.7M813.0,964.2V965.8M814.0,963.1V966.9M815.0,963.3V966.7" stroke="#80858e" stroke-width="1.15"/>
<rect x="844.2" y="954.5" width="49.5" height="21" fill="#f7f7f7" stroke="#cfcfcf" stroke-width="1"/>
<path d="M846.2,958.1V971.9M847.2,957.0V973.0M848.2,957.3V972.7M849.2,963.0V967.0M850.2,956.0V974.0M851.2,963.1V966.9M852.2,963.7V966.3M853.2,963.1V966.9M854.2,962.9V967.1M855.2,963.9V966.1M856.2,961.7V968.3M857.2,962.8V967.2M858.2,957.5V972.5M859.2,960.5V969.5M860.2,956.8V973.2M861.2,959.5V970.5M862.2,959.4V970.6M863.2,959.1V970.9M864.2,963.6V966.4M865.2,957.0V973.0M866.2,962.1V967.9M867.2,963.3V966.7M868.2,956.3V973.7M869.2,960.2V969.8M870.2,961.3V968.7M871.2,964.4V965.6M872.2,963.0V967.0M873.2,961.8V968.2M874.2,957.2V972.8M875.2,962.3V967.7M876.2,964.2V965.8M877.2,963.2V966.8M878.2,963.9V966.1M879.2,961.1V968.9M880.2,959.2V970.8M881.2,962.6V967.4M882.2,962.9V967.1M883.2,964.4V965.6M884.2,956.4V973.6M885.2,961.8V968.2M886.2,957.8V972.2M887.2,963.7V966.3M888.2,962.7V967.3M889.2,956.6V973.4M890.2,957.7V972.3M891.2,963.4V966.6" stroke="#80858e" stroke-width="1.15"/>
<rect x="913.4" y="954.5" width="63.1" height="21" fill="#f7f7f7" stroke="#cfcfcf" stroke-width="1"/>
<path d="M915.4,957.4V972.6M916.4,961.0V969.0M917.4,962.8V967.2M918.4,958.2V971.8M919.4,956.4V973.6M920.4,964.7V965.3M921.4,961.6V968.4M922.4,956.8V973.2M923.4,960.3V969.7M924.4,962.2V967.8M925.4,963.2V966.8M926.4,962.9V967.1M927.4,960.3V969.7M928.4,964.4V965.6M929.4,960.4V969.6M930.4,964.7V965.3M931.4,961.6V968.4M932.4,962.8V967.2M933.4,960.8V969.2M934.4,963.5V966.5M935.4,956.5V973.5M936.4,957.5V972.5M937.4,964.0V966.0M938.4,956.5V973.5M939.4,963.5V966.5M940.4,961.8V968.2M941.4,962.6V967.4M942.4,960.1V969.9M943.4,964.0V966.0M944.4,963.2V966.8M945.4,959.9V970.1M946.4,958.6V971.4M947.4,961.8V968.2M948.4,956.4V973.6M949.4,958.3V971.7M950.4,963.3V966.7M951.4,962.9V967.1M952.4,961.9V968.1M953.4,964.1V965.9M954.4,960.1V969.9M955.4,964.1V965.9M956.4,962.8V967.2M957.4,964.5V965.5M958.4,964.1V965.9M959.4,957.3V972.7M960.4,959.4V970.6M961.4,956.9V973.1M962.4,962.9V967.1M963.4,959.2V970.8M964.4,960.1V969.9M965.4,962.9V967.1M966.4,964.4V965.6M967.4,963.7V966.3M968.4,956.6V973.4M969.4,956.5V973.5M970.4,963.1V966.9M971.4,958.3V971.7M972.4,963.9V966.1M973.4,962.9V967.1M974.4,964.2V965.8" stroke="#80858e" stroke-width="1.15"/>
<rect x="999" y="954.5" width="36.7" height="21" fill="#f7f7f7" stroke="#cfcfcf" stroke-width="1"/>
<path d="M1001.0,957.4V972.6M1002.0,962.6V967.4M1003.0,959.0V971.0M1004.0,964.9V965.1M1005.0,957.1V972.9M1006.0,959.2V970.8M1007.0,963.2V966.8M1008.0,956.6V973.4M1009.0,963.4V966.6M1010.0,963.4V966.6M1011.0,963.3V966.7M1012.0,957.1V972.9M1013.0,956.8V973.2M1014.0,963.9V966.1M1015.0,956.6V973.4M1016.0,962.8V967.2M1017.0,962.5V967.5M1018.0,957.0V973.0M1019.0,958.5V971.5M1020.0,958.3V971.7M1021.0,960.7V969.3M1022.0,963.4V966.6M1023.0,958.8V971.2M1024.0,963.3V966.7M1025.0,963.9V966.1M1026.0,963.8V966.2M1027.0,962.8V967.2M1028.0,957.5V972.5M1029.0,963.8V966.2M1030.0,963.9V966.1M1031.0,959.6V970.4M1032.0,964.0V966.0M1033.0,960.6V969.4" stroke="#80858e" stroke-width="1.15"/>
<rect x="1066" y="954.5" width="42.5" height="21" fill="#f7f7f7" stroke="#cfcfcf" stroke-width="1"/>
<path d="M1068.0,959.2V970.8M1069.0,960.1V969.9M1070.0,958.1V971.9M1071.0,961.2V968.8M1072.0,959.3V970.7M1073.0,963.9V966.1M1074.0,963.0V967.0M1075.0,961.0V969.0M1076.0,962.8V967.2M1077.0,961.7V968.3M1078.0,958.5V971.5M1079.0,956.1V973.9M1080.0,962.1V967.9M1081.0,958.1V971.9M1082.0,964.3V965.7M1083.0,964.6V965.4M1084.0,956.4V973.6M1085.0,956.9V973.1M1086.0,957.7V972.3M1087.0,963.3V966.7M1088.0,956.7V973.3M1089.0,960.9V969.1M1090.0,964.1V965.9M1091.0,964.5V965.5M1092.0,963.7V966.3M1093.0,960.3V969.7M1094.0,964.3V965.7M1095.0,960.0V970.0M1096.0,963.4V966.6M1097.0,958.6V971.4M1098.0,964.8V965.2M1099.0,962.8V967.2M1100.0,960.4V969.6M1101.0,963.4V966.6M1102.0,962.6V967.4M1103.0,962.9V967.1M1104.0,963.4V966.6M1105.0,963.1V966.9M1106.0,957.8V972.2" stroke="#80858e" stroke-width="1.15"/>
<rect x="1137.3" y="954.5" width="54.1" height="21" fill="#f7f7f7" stroke="#cfcfcf" stroke-width="1"/>
<path d="M1139.3,963.0V967.0M1140.3,959.4V970.6M1141.3,963.0V967.0M1142.3,962.5V967.5M1143.3,962.7V967.3M1144.3,962.2V967.8M1145.3,963.8V966.2M1146.3,960.4V969.6M1147.3,963.6V966.4M1148.3,963.0V967.0M1149.3,964.4V965.6M1150.3,961.6V968.4M1151.3,963.9V966.1M1152.3,958.5V971.5M1153.3,964.2V965.8M1154.3,956.8V973.2M1155.3,962.0V968.0M1156.3,957.0V973.0M1157.3,957.3V972.7M1158.3,958.3V971.7M1159.3,958.7V971.3M1160.3,962.7V967.3M1161.3,958.2V971.8M1162.3,964.1V965.9M1163.3,961.6V968.4M1164.3,964.4V965.6M1165.3,959.4V970.6M1166.3,963.7V966.3M1167.3,959.1V970.9M1168.3,958.1V971.9M1169.3,960.8V969.2M1170.3,960.5V969.5M1171.3,962.5V967.5M1172.3,962.5V967.5M1173.3,962.3V967.7M1174.3,963.6V966.4M1175.3,961.9V968.1M1176.3,959.0V971.0M1177.3,962.2V967.8M1178.3,962.1V967.9M1179.3,964.0V966.0M1180.3,964.0V966.0M1181.3,961.7V968.3M1182.3,960.4V969.6M1183.3,959.3V970.7M1184.3,961.7V968.3M1185.3,961.8V968.2M1186.3,956.7V973.3M1187.3,957.9V972.1M1188.3,959.4V970.6M1189.3,962.8V967.2" stroke="#80858e" stroke-width="1.15"/>
<rect x="1265.3" y="954.5" width="60.1" height="21" fill="#f7f7f7" stroke="#cfcfcf" stroke-width="1"/>
<path d="M1267.3,961.9V968.1M1268.3,957.1V972.9M1269.3,958.7V971.3M1270.3,964.2V965.8M1271.3,959.1V970.9M1272.3,957.4V972.6M1273.3,958.4V971.6M1274.3,961.8V968.2M1275.3,964.1V965.9M1276.3,961.8V968.2M1277.3,964.6V965.4M1278.3,962.9V967.1M1279.3,960.0V970.0M1280.3,963.2V966.8M1281.3,963.8V966.2M1282.3,960.4V969.6M1283.3,957.7V972.3M1284.3,961.0V969.0M1285.3,962.8V967.2M1286.3,960.5V969.5M1287.3,958.6V971.4M1288.3,956.1V973.9M1289.3,963.1V966.9M1290.3,962.4V967.6M1291.3,959.2V970.8M1292.3,958.3V971.7M1293.3,960.4V969.6M1294.3,961.0V969.0M1295.3,963.4V966.6M1296.3,964.7V965.3M1297.3,960.6V969.4M1298.3,961.7V968.3M1299.3,964.5V965.5M1300.3,960.2V969.8M1301.3,964.2V965.8M1302.3,964.2V965.8M1303.3,963.7V966.3M1304.3,960.9V969.1M1305.3,960.6V969.4M1306.3,962.9V967.1M1307.3,963.9V966.1M1308.3,963.6V966.4M1309.3,957.7V972.3M1310.3,962.7V967.3M1311.3,963.5V966.5M1312.3,961.2V968.8M1313.3,960.3V969.7M1314.3,956.8V973.2M1315.3,963.0V967.0M1316.3,963.8V966.2M1317.3,962.7V967.3M1318.3,963.2V966.8M1319.3,963.8V966.2M1320.3,956.8V973.2M1321.3,963.6V966.4M1322.3,961.8V968.2M1323.3,958.4V971.6" stroke="#80858e" stroke-width="1.15"/>
<rect x="175.5" y="984.5" width="1245" height="21" fill="#fff" stroke="#dcdccc" stroke-width="1"/>
<line x1="178" y1="994" x2="1418" y2="994" stroke="#80858e" stroke-width="1.15"/>
<path d="M190.0,993.5V994.5M191.0,991.9V996.1M192.0,992.4V995.6M193.0,992.0V996.0M194.0,993.1V994.9M195.0,993.1V994.9M196.0,993.9V994.1M197.0,994.0V994.0M198.0,992.3V995.7M199.0,992.0V996.0M200.0,993.6V994.4M201.0,993.2V994.8M202.0,992.9V995.1M203.0,992.6V995.4M204.0,993.2V994.8M205.0,994.0V994.0M206.0,993.6V994.4M207.0,991.7V996.3M208.0,993.4V994.6M209.0,992.6V995.4M210.0,991.8V996.2M211.0,992.4V995.6M212.0,991.6V996.4M213.0,992.0V996.0M214.0,992.0V996.0M215.0,992.4V995.6M216.0,993.5V994.5M217.0,992.6V995.4M218.0,991.8V996.2M219.0,994.0V994.0M220.0,991.7V996.3M221.0,993.8V994.2M222.0,994.0V994.0M223.0,992.6V995.4M224.0,992.3V995.7M225.0,992.7V995.3M226.0,992.1V995.9M227.0,991.8V996.2M228.0,991.9V996.1M229.0,988.4V999.6M230.0,993.7V994.3M231.0,994.0V994.0M232.0,992.1V995.9M233.0,992.1V995.9M234.0,993.5V994.5M235.0,993.9V994.1M236.0,993.7V994.3M237.0,993.2V994.8M238.0,993.6V994.4M239.0,992.4V995.6M240.0,993.4V994.6M241.0,991.5V996.5M242.0,990.8V997.2M243.0,993.2V994.8M244.0,992.2V995.8M245.0,992.4V995.6M246.0,993.7V994.3M247.0,993.7V994.3M248.0,993.7V994.3M249.0,993.7V994.3M250.0,991.6V996.4M251.0,993.0V995.0M252.0,992.1V995.9M253.0,993.0V995.0M254.0,992.0V996.0M255.0,991.7V996.3M256.0,993.7V994.3M257.0,993.0V995.0M258.0,992.6V995.4M259.0,992.2V995.8M260.0,992.2V995.8M261.0,993.3V994.7M262.0,993.3V994.7M263.0,993.8V994.2M264.0,993.9V994.1M265.0,993.6V994.4M266.0,991.6V996.4M267.0,991.9V996.1M268.0,993.1V994.9M269.0,992.3V995.7M270.0,992.6V995.4M271.0,993.4V994.6M272.0,992.0V996.0M273.0,992.3V995.7M274.0,993.1V994.9M275.0,992.8V995.2M276.0,993.1V994.9M277.0,993.1V994.9M278.0,993.5V994.5M279.0,992.0V996.0M280.0,993.8V994.2M281.0,993.4V994.6M282.0,993.8V994.2M283.0,993.7V994.3M284.0,990.0V998.0M285.0,991.6V996.4M286.0,993.3V994.7M287.0,989.5V998.5M288.0,993.2V994.8M289.0,992.6V995.4M290.0,993.7V994.3M291.0,994.0V994.0M292.0,992.2V995.8M293.0,993.0V995.0M294.0,993.1V994.9M295.0,992.7V995.3M296.0,992.3V995.7M297.0,992.0V996.0M298.0,992.3V995.7M299.0,993.6V994.4M300.0,991.9V996.1M301.0,992.4V995.6M302.0,990.4V997.6M303.0,993.1V994.9M304.0,992.6V995.4M305.0,993.2V994.8M306.0,992.4V995.6M307.0,993.6V994.4M308.0,993.1V994.9M309.0,993.2V994.8M310.0,991.7V996.3M311.0,992.6V995.4M312.0,993.3V994.7M313.0,991.6V996.4M314.0,992.9V995.1M315.0,992.2V995.8M316.0,991.4V996.6M317.0,992.8V995.2M318.0,992.4V995.6M319.0,992.6V995.4M320.0,992.9V995.1M321.0,991.7V996.3M322.0,992.5V995.5M323.0,992.2V995.8M324.0,991.6V996.4M325.0,993.9V994.1M326.0,993.2V994.8M327.0,993.2V994.8M328.0,992.4V995.6M329.0,993.6V994.4M330.0,992.3V995.7M331.0,991.4V996.6M332.0,992.1V995.9M333.0,993.7V994.3M334.0,992.2V995.8M335.0,992.6V995.4M336.0,992.8V995.2M337.0,991.6V996.4M338.0,992.6V995.4M339.0,992.1V995.9M340.0,993.5V994.5M341.0,993.8V994.2M342.0,993.4V994.6M343.0,992.9V995.1M344.0,993.6V994.4M345.0,993.7V994.3M346.0,992.4V995.6M347.0,993.6V994.4M348.0,993.0V995.0M349.0,992.6V995.4M350.0,993.3V994.7M351.0,989.1V998.9M352.0,992.0V996.0M353.0,989.6V998.4M354.0,992.0V996.0M355.0,994.0V994.0M356.0,991.7V996.3M357.0,993.6V994.4M358.0,993.8V994.2M359.0,992.2V995.8M360.0,993.8V994.2M361.0,989.6V998.4M362.0,991.8V996.2M363.0,992.2V995.8M364.0,991.8V996.2M365.0,992.0V996.0M366.0,992.4V995.6M367.0,992.3V995.7M368.0,991.9V996.1M369.0,993.6V994.4M370.0,993.8V994.2M371.0,993.9V994.1M372.0,993.8V994.2M373.0,993.0V995.0M374.0,991.9V996.1M375.0,992.0V996.0M376.0,992.8V995.2M377.0,992.0V996.0M378.0,993.2V994.8M379.0,993.8V994.2M380.0,992.6V995.4M381.0,992.7V995.3M382.0,991.7V996.3M383.0,991.6V996.4M384.0,993.0V995.0M385.0,993.9V994.1M386.0,992.6V995.4M387.0,991.9V996.1M388.0,993.1V994.9M389.0,992.2V995.8M390.0,993.2V994.8M391.0,992.8V995.2M392.0,993.5V994.5M393.0,993.2V994.8M394.0,993.5V994.5M395.0,991.6V996.4M396.0,992.2V995.8M397.0,993.4V994.6M398.0,992.8V995.2M399.0,992.2V995.8M400.0,992.4V995.6M401.0,991.3V996.7M402.0,993.5V994.5M403.0,993.7V994.3M404.0,990.9V997.1M405.0,992.2V995.8M406.0,990.8V997.2M407.0,992.6V995.4M408.0,992.7V995.3M409.0,993.7V994.3M410.0,993.1V994.9M411.0,993.9V994.1M412.0,994.0V994.0M413.0,991.8V996.2M414.0,993.3V994.7M415.0,987.0V1001.0M416.0,987.4V1000.6M417.0,989.7V998.3M418.0,992.5V995.5M419.0,992.1V995.9M420.0,991.1V996.9M421.0,992.0V996.0M422.0,991.0V997.0M423.0,988.9V999.1M424.0,985.8V1002.2M425.0,993.8V994.2M426.0,989.7V998.3M427.0,993.9V994.1M428.0,993.4V994.6M429.0,987.2V1000.8M430.0,989.6V998.4M431.0,985.9V1002.1M432.0,990.8V997.2M433.0,994.0V994.0M434.0,991.4V996.6M435.0,989.4V998.6M436.0,985.7V1002.3M437.0,985.2V1002.8M438.0,990.6V997.4M439.0,991.2V996.8M440.0,993.5V994.5M441.0,988.9V999.1M442.0,992.8V995.2M443.0,993.2V994.8M444.0,994.0V994.0M445.0,994.0V994.0M446.0,988.5V999.5M447.0,993.4V994.6M448.0,985.4V1002.6M449.0,993.6V994.4M450.0,986.5V1001.5M451.0,993.4V994.6M452.0,994.0V994.0M453.0,988.1V999.9M454.0,992.6V995.4M455.0,988.0V1000.0M456.0,993.0V995.0M457.0,993.8V994.2M458.0,987.5V1000.5M459.0,988.2V999.8M460.0,986.7V1001.3M461.0,988.0V1000.0M462.0,993.6V994.4M463.0,989.1V998.9M464.0,988.2V999.8M465.0,990.7V997.3M466.0,985.8V1002.2M467.0,992.5V995.5M468.0,985.4V1002.6M469.0,988.2V999.8M470.0,994.0V994.0M471.0,994.0V994.0M472.0,988.9V999.1M473.0,987.1V1000.9M474.0,993.7V994.3M475.0,992.0V996.0M476.0,988.0V1000.0M477.0,993.1V994.9M478.0,986.6V1001.4M479.0,990.5V997.5M480.0,993.8V994.2M481.0,991.5V996.5M482.0,989.6V998.4M483.0,990.9V997.1M484.0,988.6V999.4M485.0,993.3V994.7M486.0,987.3V1000.7M487.0,991.6V996.4M488.0,988.9V999.1M489.0,989.1V998.9M490.0,991.1V996.9M491.0,991.4V996.6M492.0,987.4V1000.6M493.0,985.6V1002.4M494.0,987.4V1000.6M495.0,989.7V998.3M496.0,992.2V995.8M497.0,993.8V994.2M498.0,985.3V1002.7M499.0,988.3V999.7M500.0,987.0V1001.0M501.0,991.9V996.1M502.0,989.3V998.7M503.0,985.3V1002.7M504.0,986.9V1001.1M505.0,989.4V998.6M506.0,992.0V996.0M507.0,991.0V997.0M508.0,986.3V1001.7M509.0,991.5V996.5M510.0,988.5V999.5M511.0,989.3V998.7M512.0,986.2V1001.8M513.0,987.2V1000.8M514.0,992.3V995.7M515.0,994.0V994.0M516.0,992.4V995.6M517.0,991.1V996.9M518.0,989.5V998.5M519.0,987.1V1000.9M520.0,986.3V1001.7M521.0,993.9V994.1M522.0,986.9V1001.1M523.0,987.1V1000.9M524.0,986.5V1001.5M525.0,989.6V998.4M526.0,992.3V995.7M527.0,986.7V1001.3M528.0,987.2V1000.8M529.0,988.5V999.5M530.0,986.0V1002.0M531.0,991.7V996.3M532.0,993.6V994.4M533.0,989.8V998.2M534.0,987.3V1000.7M535.0,992.9V995.1M536.0,987.8V1000.2M537.0,985.8V1002.2M538.0,992.6V995.4M539.0,989.3V998.7M540.0,988.6V999.4M541.0,990.7V997.3M542.0,992.8V995.2M543.0,992.5V995.5M544.0,987.8V1000.2M545.0,987.4V1000.6M546.0,990.7V997.3M547.0,993.6V994.4M548.0,987.2V1000.8M549.0,987.6V1000.4M550.0,992.6V995.4M551.0,989.6V998.4M552.0,986.2V1001.8M553.0,986.3V1001.7M554.0,990.1V997.9M555.0,990.6V997.4M556.0,989.5V998.5M557.0,993.0V995.0M558.0,992.9V995.1M559.0,993.0V995.0M560.0,988.3V999.7M561.0,991.6V996.4M562.0,989.7V998.3M563.0,991.2V996.8M564.0,990.2V997.8M565.0,993.2V994.8M566.0,993.8V994.2M567.0,985.0V1003.0M568.0,991.5V996.5M569.0,993.5V994.5M570.0,989.0V999.0M571.0,987.4V1000.6M572.0,993.2V994.8M573.0,989.4V998.6M574.0,991.7V996.3M575.0,990.2V997.8M576.0,993.9V994.1M577.0,993.9V994.1M578.0,985.1V1002.9M579.0,986.5V1001.5M580.0,990.5V997.5M581.0,989.7V998.3M582.0,992.4V995.6M583.0,987.5V1000.5M584.0,991.0V997.0M585.0,985.6V1002.4M586.0,987.6V1000.4M587.0,987.1V1000.9M588.0,985.4V1002.6M589.0,992.5V995.5M590.0,993.9V994.1M591.0,992.9V995.1M592.0,993.0V995.0M593.0,993.6V994.4M594.0,993.8V994.2M595.0,989.8V998.2M596.0,986.5V1001.5M597.0,990.7V997.3M598.0,985.6V1002.4M599.0,986.0V1002.0M600.0,993.7V994.3M601.0,989.4V998.6M602.0,991.3V996.7M603.0,993.4V994.6M604.0,985.5V1002.5M605.0,992.5V995.5M606.0,989.7V998.3M607.0,989.0V999.0M608.0,985.5V1002.5M609.0,988.7V999.3M610.0,991.3V996.7M611.0,990.8V997.2M612.0,993.2V994.8M613.0,985.4V1002.6M614.0,985.1V1002.9M615.0,992.7V995.3M616.0,993.9V994.1M617.0,992.5V995.5M618.0,991.7V996.3M619.0,986.1V1001.9M620.0,986.1V1001.9M621.0,986.9V1001.1M622.0,993.8V994.2M623.0,987.4V1000.6M624.0,988.2V999.8M625.0,988.9V999.1M626.0,985.2V1002.8M627.0,993.8V994.2M628.0,993.3V994.7M629.0,987.8V1000.2M630.0,985.7V1002.3M631.0,988.6V999.4M632.0,992.1V995.9M633.0,989.5V998.5M634.0,987.7V1000.3M635.0,993.5V994.5M636.0,991.9V996.1M637.0,992.5V995.5M638.0,993.4V994.6M639.0,990.5V997.5M640.0,993.1V994.9M641.0,992.6V995.4M642.0,993.3V994.7M643.0,988.6V999.4M644.0,994.0V994.0M645.0,988.2V999.8M646.0,992.9V995.1M647.0,993.9V994.1M648.0,985.8V1002.2M649.0,992.7V995.3M650.0,985.8V1002.2M651.0,986.5V1001.5M652.0,986.3V1001.7M653.0,993.3V994.7M654.0,990.8V997.2M655.0,993.6V994.4M656.0,985.8V1002.2M657.0,986.8V1001.2M658.0,989.1V998.9M659.0,990.8V997.2M660.0,991.8V996.2M661.0,987.0V1001.0M662.0,990.6V997.4M663.0,989.1V998.9M664.0,993.3V994.7M665.0,992.7V995.3M666.0,993.8V994.2M667.0,988.2V999.8M668.0,989.8V998.2M669.0,993.3V994.7M670.0,986.5V1001.5M671.0,992.4V995.6M672.0,991.2V996.8M673.0,993.2V994.8M674.0,992.4V995.6M675.0,986.8V1001.2M676.0,991.8V996.2M677.0,993.1V994.9M678.0,990.4V997.6M679.0,992.0V996.0M680.0,986.1V1001.9M681.0,993.5V994.5M682.0,985.2V1002.8M683.0,993.8V994.2M684.0,986.2V1001.8M685.0,988.7V999.3M686.0,992.8V995.2M687.0,990.6V997.4M688.0,992.2V995.8M689.0,992.5V995.5M690.0,992.9V995.1M691.0,991.6V996.4M692.0,985.1V1002.9M693.0,985.0V1003.0M694.0,985.9V1002.1M695.0,993.6V994.4M696.0,992.2V995.8M697.0,986.2V1001.8M698.0,993.8V994.2M699.0,988.1V999.9M700.0,992.2V995.8M701.0,985.2V1002.8M702.0,994.0V994.0M703.0,987.2V1000.8M704.0,991.8V996.2M705.0,993.3V994.7M706.0,994.0V994.0M707.0,986.9V1001.1M708.0,990.1V997.9M709.0,993.0V995.0M710.0,990.9V997.1M711.0,986.0V1002.0M712.0,992.8V995.2M713.0,989.7V998.3M714.0,993.3V994.7M715.0,993.0V995.0M716.0,987.6V1000.4M717.0,988.2V999.8M718.0,992.9V995.1M719.0,993.7V994.3M720.0,993.6V994.4M721.0,989.3V998.7M722.0,990.4V997.6M723.0,992.3V995.7M724.0,992.8V995.2M725.0,989.2V998.8M726.0,988.3V999.7M727.0,987.1V1000.9M728.0,989.5V998.5M729.0,992.9V995.1M730.0,993.7V994.3M731.0,988.0V1000.0M732.0,991.2V996.8M733.0,988.1V999.9M734.0,993.8V994.2M735.0,987.1V1000.9M736.0,991.8V996.2M737.0,986.8V1001.2M738.0,986.6V1001.4M739.0,990.4V997.6M740.0,994.0V994.0M741.0,986.0V1002.0M742.0,990.6V997.4M743.0,986.5V1001.5M744.0,992.4V995.6M745.0,993.0V995.0M746.0,986.9V1001.1M747.0,991.6V996.4M748.0,993.1V994.9M749.0,991.5V996.5M750.0,989.4V998.6M751.0,994.0V994.0M752.0,990.2V997.8M753.0,990.9V997.1M754.0,990.2V997.8M755.0,993.4V994.6M756.0,988.2V999.8M757.0,987.1V1000.9M758.0,986.5V1001.5M759.0,991.9V996.1M760.0,988.2V999.8M761.0,991.4V996.6M762.0,987.8V1000.2M763.0,993.8V994.2M764.0,986.5V1001.5M765.0,985.5V1002.5M766.0,990.4V997.6M767.0,990.2V997.8M768.0,990.1V997.9M769.0,990.0V998.0M770.0,993.9V994.1M771.0,985.4V1002.6M772.0,992.7V995.3M773.0,993.0V995.0M774.0,993.5V994.5M775.0,992.5V995.5M776.0,987.1V1000.9M777.0,993.9V994.1M778.0,993.6V994.4M779.0,988.4V999.6M780.0,992.9V995.1M781.0,994.0V994.0M782.0,989.4V998.6M783.0,989.6V998.4M784.0,990.1V997.9M785.0,988.3V999.7M786.0,993.5V994.5M787.0,986.5V1001.5M788.0,988.2V999.8M789.0,993.8V994.2M790.0,993.4V994.6M791.0,990.4V997.6M792.0,990.3V997.7M793.0,992.3V995.7M794.0,993.4V994.6M795.0,991.2V996.8M796.0,993.3V994.7M797.0,989.4V998.6M798.0,986.6V1001.4M799.0,993.3V994.7M800.0,989.6V998.4M801.0,987.8V1000.2M802.0,993.1V994.9M803.0,987.0V1001.0M804.0,985.7V1002.3M805.0,991.4V996.6M806.0,991.1V996.9M807.0,986.8V1001.2M808.0,990.1V997.9M809.0,991.3V996.7M810.0,985.7V1002.3M811.0,987.5V1000.5M812.0,991.8V996.2M813.0,992.6V995.4M814.0,991.8V996.2M815.0,990.9V997.1M816.0,985.2V1002.8M817.0,987.2V1000.8M818.0,986.0V1002.0M819.0,987.1V1000.9M820.0,986.7V1001.3M821.0,993.8V994.2M822.0,990.2V997.8M823.0,985.5V1002.5M824.0,985.8V1002.2M825.0,992.5V995.5M826.0,991.1V996.9M827.0,989.0V999.0M828.0,991.6V996.4M829.0,990.0V998.0M830.0,993.7V994.3M831.0,991.0V997.0M832.0,990.3V997.7M833.0,993.9V994.1M834.0,993.3V994.7M835.0,985.4V1002.6M836.0,987.5V1000.5M837.0,985.7V1002.3M838.0,989.0V999.0M839.0,987.2V1000.8M840.0,986.3V1001.7M841.0,986.3V1001.7M842.0,993.9V994.1M843.0,988.9V999.1M844.0,992.4V995.6M845.0,988.6V999.4M846.0,992.3V995.7M847.0,989.9V998.1M848.0,985.9V1002.1M849.0,989.2V998.8M850.0,992.5V995.5M851.0,990.2V997.8M852.0,991.0V997.0M853.0,985.6V1002.4M854.0,992.2V995.8M855.0,992.1V995.9M856.0,988.9V999.1M857.0,993.4V994.6M858.0,989.4V998.6M859.0,985.5V1002.5M860.0,990.2V997.8M861.0,992.4V995.6M862.0,990.7V997.3M863.0,990.0V998.0M864.0,993.2V994.8M865.0,993.4V994.6M866.0,993.4V994.6M867.0,992.2V995.8M868.0,991.2V996.8M869.0,992.2V995.8M870.0,992.6V995.4M871.0,993.6V994.4M872.0,989.9V998.1M873.0,986.8V1001.2M874.0,989.3V998.7M875.0,989.7V998.3M876.0,988.9V999.1M877.0,992.9V995.1M878.0,988.2V999.8M879.0,990.7V997.3M880.0,989.9V998.1M881.0,989.2V998.8M882.0,990.6V997.4M883.0,992.0V996.0M884.0,992.6V995.4M885.0,992.7V995.3M886.0,990.2V997.8M887.0,991.4V996.6M888.0,989.5V998.5M889.0,994.0V994.0M890.0,991.7V996.3M891.0,986.6V1001.4M892.0,992.6V995.4M893.0,989.8V998.2M894.0,990.4V997.6M895.0,992.2V995.8M896.0,985.1V1002.9M897.0,992.2V995.8M898.0,987.6V1000.4M899.0,993.2V994.8M900.0,993.7V994.3M901.0,986.5V1001.5M902.0,990.9V997.1M903.0,993.8V994.2M904.0,991.4V996.6M905.0,990.9V997.1M906.0,988.0V1000.0M907.0,993.5V994.5M908.0,992.7V995.3M909.0,985.5V1002.5M910.0,987.9V1000.1M911.0,993.2V994.8M912.0,991.8V996.2M913.0,991.7V996.3M914.0,988.6V999.4M915.0,989.2V998.8M916.0,986.7V1001.3M917.0,987.0V1001.0M918.0,990.2V997.8M919.0,987.9V1000.1M920.0,987.9V1000.1M921.0,987.7V1000.3M922.0,990.6V997.4M923.0,987.4V1000.6M924.0,988.2V999.8M925.0,986.0V1002.0M926.0,993.4V994.6M927.0,986.5V1001.5M928.0,994.0V994.0M929.0,987.6V1000.4M930.0,989.5V998.5M931.0,990.4V997.6M932.0,985.4V1002.6M933.0,989.6V998.4M934.0,991.1V996.9M935.0,987.4V1000.6M936.0,986.5V1001.5M937.0,989.3V998.7M938.0,991.4V996.6M939.0,990.8V997.2M940.0,990.7V997.3M941.0,988.1V999.9M942.0,992.2V995.8M943.0,991.3V996.7M944.0,989.8V998.2M945.0,991.4V996.6M946.0,991.9V996.1M947.0,987.4V1000.6M948.0,986.7V1001.3M949.0,990.3V997.7M950.0,990.9V997.1M951.0,993.0V995.0M952.0,992.1V995.9M953.0,993.3V994.7M954.0,989.6V998.4M955.0,989.6V998.4M956.0,993.6V994.4M957.0,985.9V1002.1M958.0,991.9V996.1M959.0,986.8V1001.2M960.0,986.8V1001.2M961.0,985.5V1002.5M962.0,992.9V995.1M963.0,991.0V997.0M964.0,986.0V1002.0M965.0,994.0V994.0M966.0,993.8V994.2M967.0,989.7V998.3M968.0,990.4V997.6M969.0,985.9V1002.1M970.0,987.6V1000.4M971.0,990.0V998.0M972.0,985.0V1003.0M973.0,990.2V997.8M974.0,990.2V997.8M975.0,988.5V999.5M976.0,991.4V996.6M977.0,991.6V996.4M978.0,989.4V998.6M979.0,991.7V996.3M980.0,985.6V1002.4M981.0,988.6V999.4M982.0,990.1V997.9M983.0,993.6V994.4M984.0,991.5V996.5M985.0,991.3V996.7M986.0,989.8V998.2M987.0,989.6V998.4M988.0,986.4V1001.6M989.0,985.4V1002.6M990.0,990.5V997.5M991.0,990.9V997.1M992.0,989.1V998.9M993.0,985.0V1003.0M994.0,991.8V996.2M995.0,990.1V997.9M996.0,987.1V1000.9M997.0,993.1V994.9M998.0,992.0V996.0M999.0,985.3V1002.7M1000.0,987.0V1001.0M1001.0,990.2V997.8M1002.0,993.5V994.5M1003.0,986.2V1001.8M1004.0,988.4V999.6M1005.0,987.0V1001.0M1006.0,985.1V1002.9M1007.0,986.3V1001.7M1008.0,991.1V996.9M1009.0,993.2V994.8M1010.0,992.2V995.8M1011.0,990.2V997.8M1012.0,990.3V997.7M1013.0,993.0V995.0M1014.0,993.0V995.0M1015.0,989.1V998.9M1016.0,989.3V998.7M1017.0,991.7V996.3M1018.0,985.1V1002.9M1019.0,989.0V999.0M1020.0,993.9V994.1M1021.0,991.2V996.8M1022.0,987.4V1000.6M1023.0,992.1V995.9M1024.0,988.4V999.6M1025.0,994.0V994.0M1026.0,992.1V995.9M1027.0,986.8V1001.2M1028.0,989.5V998.5M1029.0,988.7V999.3M1030.0,992.9V995.1M1031.0,990.4V997.6M1032.0,989.8V998.2M1033.0,992.4V995.6M1034.0,988.9V999.1M1035.0,990.0V998.0M1036.0,985.0V1003.0M1037.0,989.6V998.4M1038.0,991.2V996.8M1039.0,993.4V994.6M1040.0,993.2V994.8M1041.0,987.7V1000.3M1042.0,993.5V994.5M1043.0,993.5V994.5M1044.0,993.1V994.9M1045.0,990.1V997.9M1046.0,987.0V1001.0M1047.0,989.2V998.8M1048.0,987.2V1000.8M1049.0,993.8V994.2M1050.0,994.0V994.0M1051.0,987.6V1000.4M1052.0,991.9V996.1M1053.0,988.2V999.8M1054.0,991.7V996.3M1055.0,993.1V994.9M1056.0,992.4V995.6M1057.0,993.6V994.4M1058.0,986.1V1001.9M1059.0,989.5V998.5M1060.0,991.7V996.3M1061.0,990.8V997.2M1062.0,991.4V996.6M1063.0,993.8V994.2M1064.0,986.3V1001.7M1065.0,989.5V998.5M1066.0,985.5V1002.5M1067.0,990.9V997.1M1068.0,989.2V998.8M1069.0,992.5V995.5M1070.0,993.8V994.2M1071.0,985.8V1002.2M1072.0,986.7V1001.3M1073.0,992.0V996.0M1074.0,986.2V1001.8M1075.0,987.1V1000.9M1076.0,992.1V995.9M1077.0,989.3V998.7M1078.0,985.5V1002.5M1079.0,990.4V997.6M1080.0,985.6V1002.4M1081.0,992.6V995.4M1082.0,991.4V996.6M1083.0,988.1V999.9M1084.0,992.7V995.3M1085.0,992.0V996.0M1086.0,986.4V1001.6M1087.0,990.5V997.5M1088.0,987.3V1000.7M1089.0,992.6V995.4M1090.0,993.1V994.9M1091.0,991.6V996.4M1092.0,993.0V995.0M1093.0,985.3V1002.7M1094.0,992.2V995.8M1095.0,989.7V998.3M1096.0,993.5V994.5M1097.0,990.0V998.0M1098.0,991.4V996.6M1099.0,991.2V996.8M1100.0,993.7V994.3M1101.0,993.4V994.6M1102.0,987.0V1001.0M1103.0,991.7V996.3M1104.0,992.6V995.4M1105.0,993.0V995.0M1106.0,992.3V995.7M1107.0,992.6V995.4M1108.0,993.9V994.1M1109.0,988.7V999.3M1110.0,991.8V996.2M1111.0,993.2V994.8M1112.0,988.3V999.7M1113.0,993.6V994.4M1114.0,992.4V995.6M1115.0,986.9V1001.1M1116.0,993.4V994.6M1117.0,990.9V997.1M1118.0,986.9V1001.1M1119.0,987.2V1000.8M1120.0,993.2V994.8M1121.0,991.7V996.3M1122.0,988.1V999.9M1123.0,991.5V996.5M1124.0,985.5V1002.5M1125.0,992.8V995.2M1126.0,985.6V1002.4M1127.0,990.3V997.7M1128.0,992.7V995.3M1129.0,990.8V997.2M1130.0,993.4V994.6M1131.0,988.3V999.7M1132.0,992.4V995.6M1133.0,986.2V1001.8M1134.0,989.5V998.5M1135.0,991.5V996.5M1136.0,992.5V995.5M1137.0,989.3V998.7M1138.0,992.8V995.2M1139.0,986.5V1001.5M1140.0,993.4V994.6M1141.0,990.2V997.8M1142.0,989.9V998.1M1143.0,992.4V995.6M1144.0,987.6V1000.4M1145.0,991.4V996.6M1146.0,988.8V999.2M1147.0,989.7V998.3M1148.0,992.0V996.0M1149.0,991.4V996.6M1150.0,993.6V994.4M1151.0,993.1V994.9M1152.0,986.7V1001.3M1153.0,991.9V996.1M1154.0,988.7V999.3M1155.0,993.5V994.5M1156.0,989.7V998.3M1157.0,991.6V996.4M1158.0,990.3V997.7M1159.0,992.1V995.9M1160.0,993.7V994.3M1161.0,992.0V996.0M1162.0,992.7V995.3M1163.0,993.4V994.6M1164.0,988.2V999.8M1165.0,992.3V995.7M1166.0,991.2V996.8M1167.0,986.1V1001.9M1168.0,987.5V1000.5M1169.0,986.3V1001.7M1170.0,986.6V1001.4M1171.0,993.4V994.6M1172.0,992.3V995.7M1173.0,993.9V994.1M1174.0,988.6V999.4M1175.0,988.7V999.3M1176.0,991.7V996.3M1177.0,991.2V996.8M1178.0,988.8V999.2M1179.0,988.3V999.7M1180.0,992.5V995.5M1181.0,986.8V1001.2M1182.0,991.7V996.3M1183.0,989.1V998.9M1184.0,993.0V995.0M1185.0,993.5V994.5M1186.0,986.0V1002.0M1187.0,988.0V1000.0M1188.0,988.2V999.8M1189.0,993.9V994.1M1190.0,993.9V994.1M1191.0,993.2V994.8M1192.0,992.9V995.1M1193.0,992.1V995.9M1194.0,991.4V996.6M1195.0,993.9V994.1M1196.0,992.0V996.0M1197.0,989.0V999.0M1198.0,993.0V995.0M1199.0,986.8V1001.2M1200.0,989.7V998.3M1201.0,988.2V999.8M1202.0,992.5V995.5M1203.0,991.0V997.0M1204.0,988.5V999.5M1205.0,991.7V996.3M1206.0,994.0V994.0M1207.0,986.9V1001.1M1208.0,987.5V1000.5M1209.0,992.2V995.8M1210.0,993.8V994.2M1211.0,986.7V1001.3M1212.0,989.3V998.7M1213.0,993.8V994.2M1214.0,992.6V995.4M1215.0,993.5V994.5M1216.0,987.4V1000.6M1217.0,992.8V995.2M1218.0,986.0V1002.0M1219.0,987.8V1000.2M1220.0,993.6V994.4M1221.0,988.4V999.6M1222.0,991.3V996.7M1223.0,987.8V1000.2M1224.0,987.0V1001.0M1225.0,992.3V995.7M1226.0,993.6V994.4M1227.0,985.6V1002.4M1228.0,991.1V996.9M1229.0,985.8V1002.2M1230.0,988.4V999.6M1231.0,987.9V1000.1M1232.0,986.9V1001.1M1233.0,989.1V998.9M1234.0,990.8V997.2M1235.0,993.8V994.2M1236.0,988.4V999.6M1237.0,991.0V997.0M1238.0,990.2V997.8M1239.0,985.8V1002.2M1240.0,993.4V994.6M1241.0,987.7V1000.3M1242.0,993.8V994.2M1243.0,988.3V999.7M1244.0,987.2V1000.8M1245.0,992.4V995.6M1246.0,989.9V998.1M1247.0,985.4V1002.6M1248.0,989.0V999.0M1249.0,989.9V998.1M1250.0,992.5V995.5M1251.0,993.8V994.2M1252.0,991.6V996.4M1253.0,991.2V996.8M1254.0,992.9V995.1M1255.0,992.0V996.0M1256.0,993.3V994.7M1257.0,988.3V999.7M1258.0,988.6V999.4M1259.0,992.6V995.4M1260.0,992.6V995.4M1261.0,990.2V997.8M1262.0,990.9V997.1M1263.0,985.7V1002.3M1264.0,991.7V996.3M1265.0,992.1V995.9M1266.0,986.3V1001.7M1267.0,993.3V994.7M1268.0,989.7V998.3M1269.0,991.8V996.2M1270.0,987.1V1000.9M1271.0,989.9V998.1M1272.0,987.7V1000.3M1273.0,993.1V994.9M1274.0,988.7V999.3M1275.0,989.4V998.6M1276.0,990.7V997.3M1277.0,987.6V1000.4M1278.0,986.9V1001.1M1279.0,993.5V994.5M1280.0,992.2V995.8M1281.0,991.6V996.4M1282.0,992.8V995.2M1283.0,993.8V994.2M1284.0,992.3V995.7M1285.0,992.9V995.1M1286.0,988.3V999.7M1287.0,990.8V997.2M1288.0,993.5V994.5M1289.0,991.9V996.1M1290.0,990.6V997.4M1291.0,992.7V995.3M1292.0,993.5V994.5M1293.0,993.8V994.2M1294.0,994.0V994.0M1295.0,989.1V998.9M1296.0,990.6V997.4M1297.0,993.8V994.2M1298.0,990.8V997.2M1299.0,989.1V998.9M1300.0,991.6V996.4M1301.0,993.7V994.3M1302.0,992.0V996.0M1303.0,992.3V995.7M1304.0,993.4V994.6M1305.0,991.7V996.3M1306.0,994.0V994.0M1307.0,989.5V998.5M1308.0,991.2V996.8M1309.0,991.3V996.7M1310.0,989.4V998.6M1311.0,991.1V996.9M1312.0,993.2V994.8M1313.0,993.2V994.8M1314.0,993.6V994.4M1315.0,994.0V994.0M1316.0,990.4V997.6M1317.0,990.0V998.0M1318.0,993.0V995.0M1319.0,993.4V994.6M1320.0,991.2V996.8M1321.0,990.0V998.0M1322.0,989.5V998.5M1323.0,993.5V994.5M1324.0,990.4V997.6M1325.0,990.1V997.9M1326.0,990.6V997.4M1327.0,992.8V995.2M1328.0,993.4V994.6M1329.0,990.1V997.9M1330.0,992.9V995.1M1331.0,992.6V995.4M1332.0,991.7V996.3M1333.0,992.6V995.4M1334.0,990.1V997.9M1335.0,993.2V994.8M1336.0,993.9V994.1M1337.0,991.6V996.4M1338.0,991.3V996.7M1339.0,990.1V997.9M1340.0,990.8V997.2M1341.0,989.6V998.4M1342.0,989.4V998.6M1343.0,992.0V996.0M1344.0,992.0V996.0M1345.0,993.5V994.5M1346.0,993.0V995.0M1347.0,991.5V996.5M1348.0,993.8V994.2M1349.0,990.9V997.1M1350.0,993.5V994.5M1351.0,992.3V995.7M1352.0,989.2V998.8M1353.0,993.8V994.2M1354.0,993.9V994.1M1355.0,992.3V995.7M1356.0,993.4V994.6M1357.0,990.7V997.3M1358.0,994.0V994.0M1359.0,990.0V998.0M1360.0,989.9V998.1M1361.0,990.3V997.7M1362.0,992.4V995.6M1363.0,993.0V995.0M1364.0,991.1V996.9M1365.0,991.9V996.1M1366.0,992.4V995.6M1367.0,992.8V995.2M1368.0,992.3V995.7M1369.0,991.1V996.9M1370.0,990.1V997.9M1371.0,989.6V998.4M1372.0,993.5V994.5M1373.0,993.0V995.0M1374.0,992.3V995.7M1375.0,991.6V996.4M1376.0,992.7V995.3M1377.0,993.4V994.6M1378.0,993.8V994.2M1379.0,992.8V995.2M1380.0,992.2V995.8M1381.0,989.2V998.8M1382.0,989.6V998.4M1383.0,989.9V998.1M1384.0,989.2V998.8M1385.0,989.2V998.8M1386.0,991.3V996.7M1387.0,990.2V997.8M1388.0,993.9V994.1M1389.0,991.0V997.0M1390.0,991.4V996.6M1391.0,993.0V995.0M1392.0,991.6V996.4M1393.0,989.3V998.7M1394.0,992.1V995.9M1395.0,991.2V996.8M1396.0,993.0V995.0M1397.0,992.8V995.2M1398.0,989.7V998.3M1399.0,994.0V994.0M1400.0,993.4V994.6M1401.0,991.0V997.0M1402.0,992.2V995.8M1403.0,993.8V994.2M1404.0,991.1V996.9M1405.0,992.6V995.4M1406.0,991.5V996.5M1407.0,992.4V995.6M1408.0,991.8V996.2M1409.0,991.6V996.4M1410.0,992.5V995.5M1411.0,993.7V994.3M1412.0,993.5V994.5M1413.0,989.7V998.3M1414.0,991.7V996.3M1415.0,993.7V994.3M1416.0,989.9V998.1M1417.0,993.2V994.8" stroke="#80858e" stroke-width="1.15"/>
<line x1="295.3" y1="846" x2="295.3" y2="1008" stroke="#d9302a" stroke-width="1.3"/>
<defs><linearGradient id="phg" x1="0" y1="0" x2="0" y2="1"><stop offset="0" stop-color="#6ab0f3"/><stop offset="1" stop-color="#2a7ed8"/></linearGradient></defs>
<path d="M288.5,828 a2.5,2.5 0 0 1 2.5,-2.5 h11 a2.5,2.5 0 0 1 2.5,2.5 v12.5 l-8,6.5 l-8,-6.5z" fill="url(#phg)" stroke="#2a6ec0" stroke-width="1"/><path d="M293,831v8M296.5,831v8M300,831v8" stroke="#fff" stroke-width="1.1"/>
<rect x="1432.5" y="863.5" width="119" height="19.5" fill="#fff" stroke="#d6d6d6"/>
<path d="M1439.5,873 h8 M1443.5,869 v8" stroke="#444" stroke-width="1.6"/>
<text x="1456.5" y="877.5" font-family="Liberation Sans" font-size="13" fill="#333">Action Line</text>
<rect x="1432.5" y="893.5" width="119" height="19.5" fill="#fff" stroke="#d6d6d6"/>
<path d="M1439.5,903 h8 M1443.5,899 v8" stroke="#444" stroke-width="1.6"/>
<text x="1456.5" y="907.5" font-family="Liberation Sans" font-size="13" fill="#333">Camera</text>
<rect x="1432.5" y="923.5" width="119" height="19.5" fill="#fff" stroke="#d6d6d6"/>
<path d="M1439.5,933 h8 M1443.5,929 v8" stroke="#444" stroke-width="1.6"/>
<text x="1456.5" y="937.5" font-family="Liberation Sans" font-size="13" fill="#333">Stage Effects</text>
<rect x="1432.5" y="953.5" width="119" height="19.5" fill="#fff" stroke="#d6d6d6"/>
<path d="M1439.5,963 h8 M1443.5,959 v8" stroke="#444" stroke-width="1.6"/>
<text x="1456.5" y="967.5" font-family="Liberation Sans" font-size="13" fill="#333">Background</text>
<rect x="1432.5" y="983.5" width="119" height="19.5" fill="#fff" stroke="#d6d6d6"/>
<path d="M1439.5,993 h8 M1443.5,989 v8" stroke="#444" stroke-width="1.6"/>
<text x="1456.5" y="997.5" font-family="Liberation Sans" font-size="13" fill="#333">Sound Line</text>
<rect x="1420.5" y="932" width="6" height="70" rx="3" fill="#c8c8c8"/>
</svg></div>
</body></html>
